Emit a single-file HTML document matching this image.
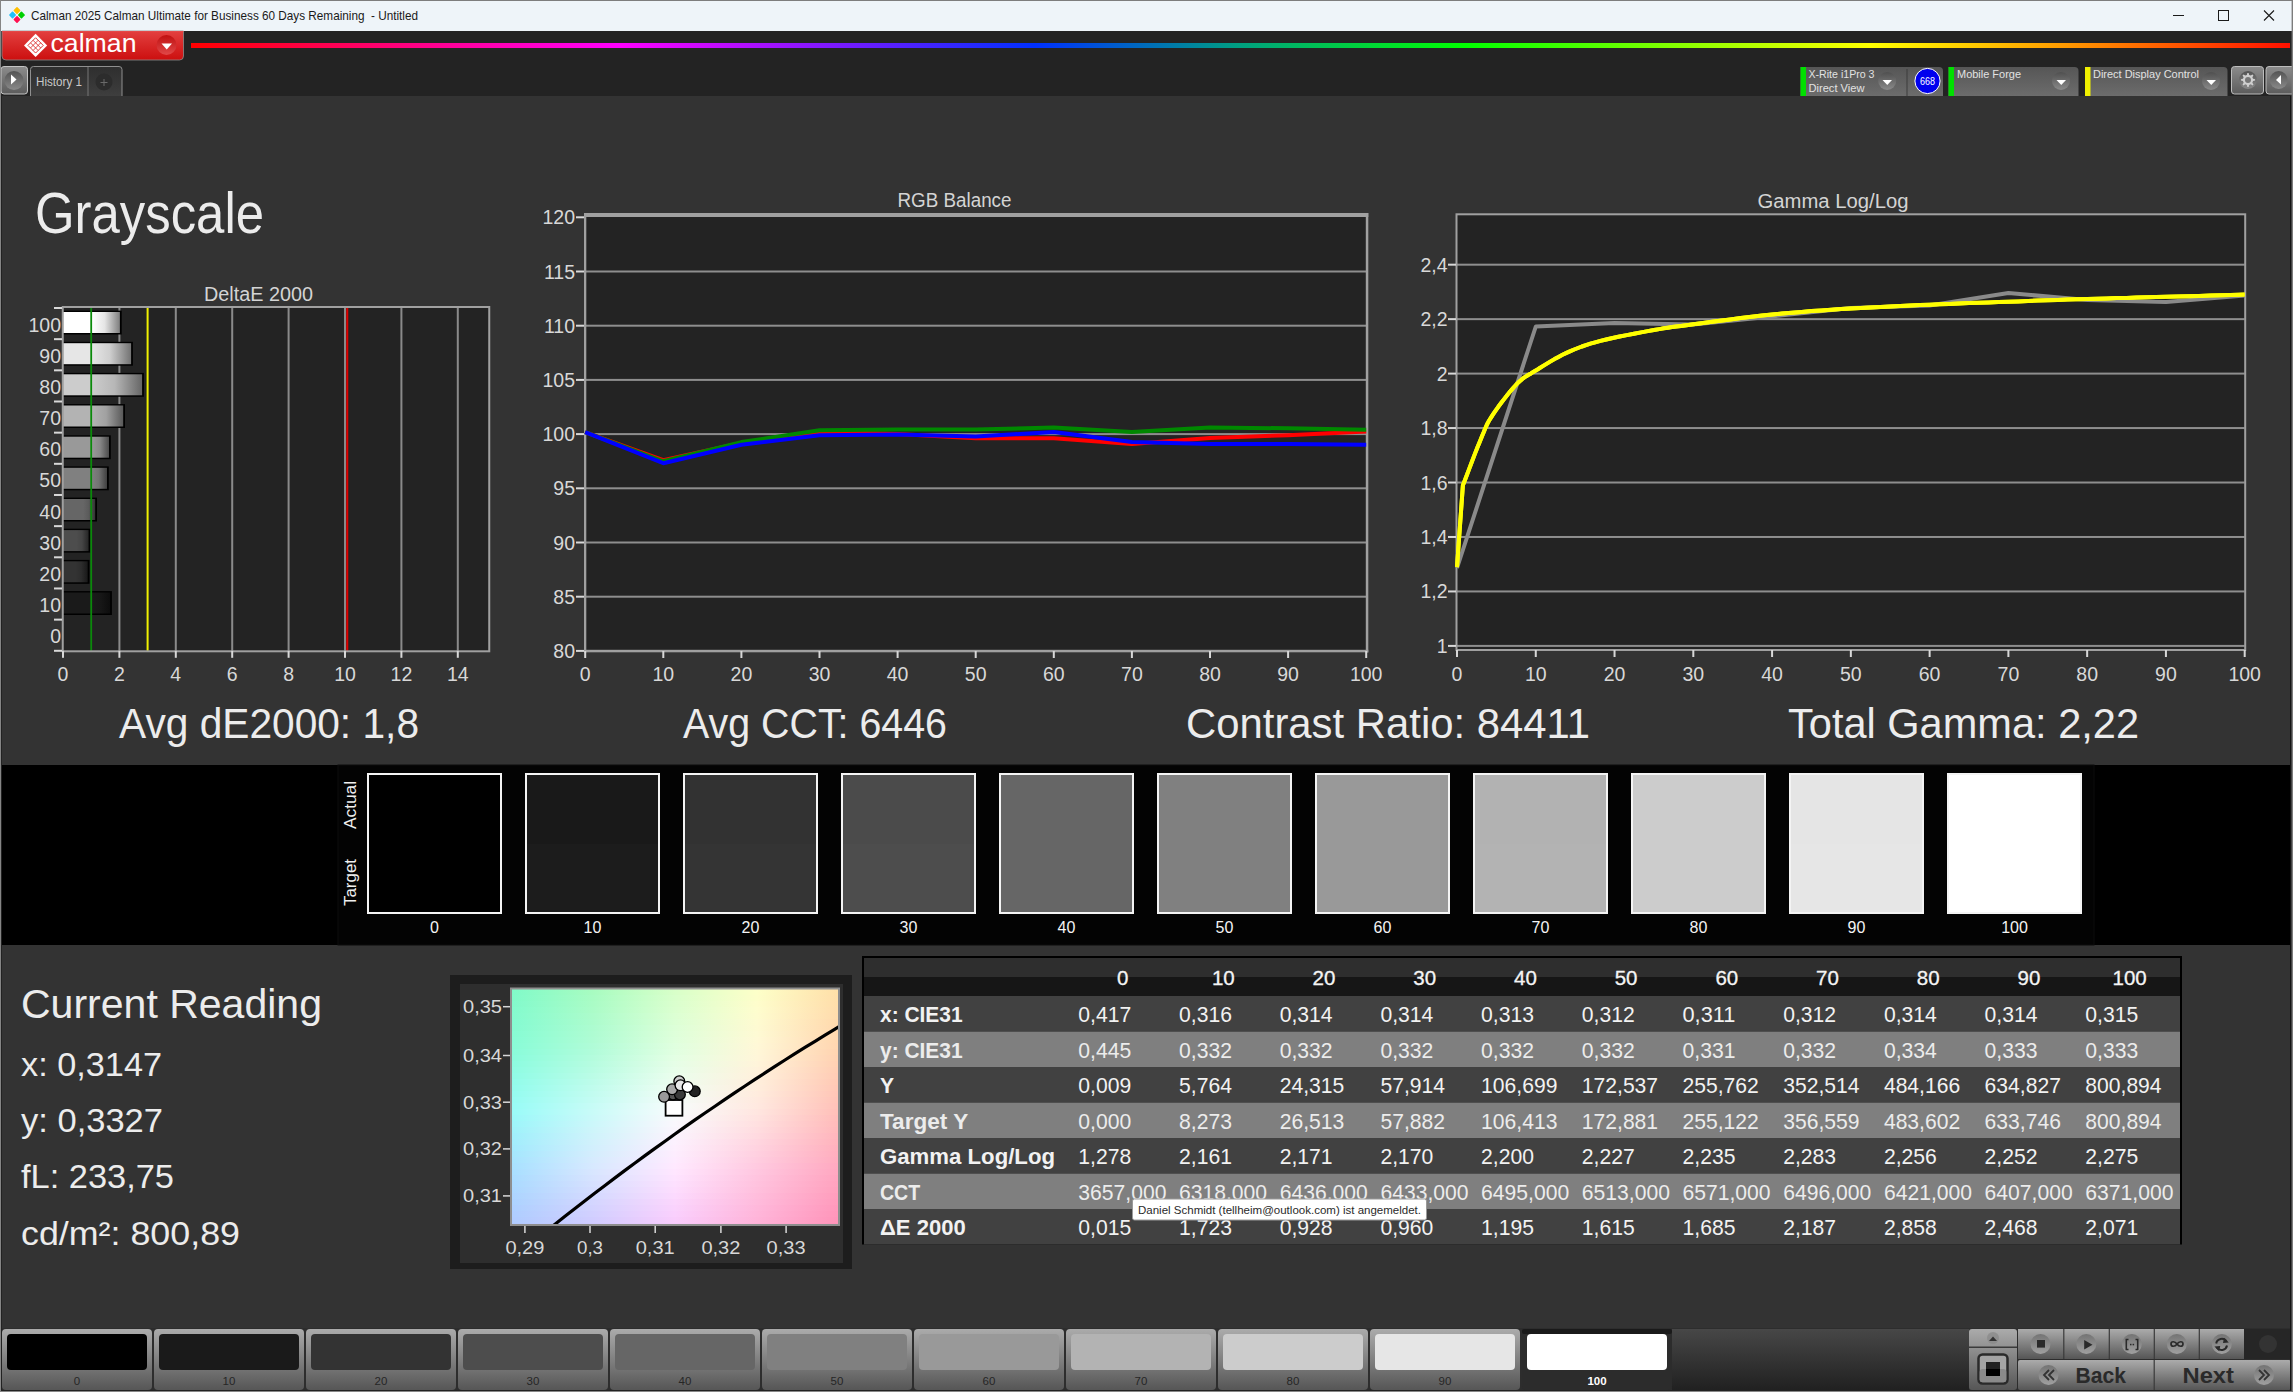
<!DOCTYPE html>
<html><head><meta charset="utf-8"><title>Calman</title>
<style>
html,body{margin:0;padding:0;width:2293px;height:1392px;overflow:hidden;background:#333;}
body{position:relative;font-family:"Liberation Sans",sans-serif;}
svg{position:absolute;left:0;top:0;}
text{font-family:"Liberation Sans",sans-serif;}
</style></head><body>

<svg width="2293" height="1392" viewBox="0 0 2293 1392">
<defs>
<linearGradient id="rainbow" x1="191" y1="0" x2="2290" y2="0" gradientUnits="userSpaceOnUse">
<stop offset="0" stop-color="#ff0000"/><stop offset="0.204" stop-color="#ff00ff"/>
<stop offset="0.402" stop-color="#0030ff"/><stop offset="0.5" stop-color="#00a080"/>
<stop offset="0.607" stop-color="#00ff00"/><stop offset="0.80" stop-color="#ffff00"/>
<stop offset="0.893" stop-color="#ff9900"/><stop offset="1" stop-color="#ff1000"/>
</linearGradient>
<linearGradient id="redbtn" x1="0" y1="0" x2="0" y2="1">
<stop offset="0" stop-color="#e3403f"/><stop offset="1" stop-color="#cc0f0f"/>
</linearGradient>
<linearGradient id="greybtn" x1="0" y1="0" x2="0" y2="1">
<stop offset="0" stop-color="#ababab"/><stop offset="1" stop-color="#565656"/>
</linearGradient>
<linearGradient id="devbox" x1="0" y1="0" x2="0" y2="1">
<stop offset="0" stop-color="#565656"/><stop offset="1" stop-color="#6c6c6c"/>
</linearGradient>
<linearGradient id="darkbar" x1="0" y1="0" x2="0" y2="1">
<stop offset="0" stop-color="#474747"/><stop offset="1" stop-color="#202020"/>
</linearGradient>
<linearGradient id="tabg" x1="0" y1="0" x2="0" y2="1">
<stop offset="0" stop-color="#2e2e2e"/><stop offset="1" stop-color="#3e3e3e"/>
</linearGradient>
<linearGradient id="playg" x1="0" y1="0" x2="0" y2="1">
<stop offset="0" stop-color="#8c8c8c"/><stop offset="1" stop-color="#5c5c5c"/>
</linearGradient>
<linearGradient id="circg2" x1="0" y1="0" x2="0" y2="1">
<stop offset="0" stop-color="#4e4e4e"/><stop offset="1" stop-color="#8e8e8e"/>
</linearGradient>
<linearGradient id="circg" x1="0" y1="0" x2="0" y2="1">
<stop offset="0" stop-color="#666"/><stop offset="1" stop-color="#b4b4b4"/>
</linearGradient>
</defs>
<rect x="0" y="0" width="2293" height="31" fill="#eef4f9"/>
<rect x="0" y="0" width="2293" height="1" fill="#7d7d7d"/>
<g transform="translate(17,15) rotate(45)"><rect x="-5.8" y="-5.8" width="5.3" height="5.3" rx="0.8" fill="#ffc000"/><rect x="0.5" y="-5.8" width="5.3" height="5.3" rx="0.8" fill="#00d000"/><rect x="-5.8" y="0.5" width="5.3" height="5.3" rx="0.8" fill="#20c0f8"/><rect x="0.5" y="0.5" width="5.3" height="5.3" rx="0.8" fill="#ff1050"/></g>
<text x="31" y="20" font-size="13" fill="#1a1a1a" text-anchor="start" textLength="387" lengthAdjust="spacingAndGlyphs" xml:space="preserve">Calman 2025 Calman Ultimate for Business 60 Days Remaining  - Untitled</text>
<rect x="2173" y="15" width="11" height="1" fill="#1a1a1a"/>
<rect x="2218.5" y="10.5" width="10" height="10" fill="none" stroke="#1a1a1a" stroke-width="1"/>
<path d="M2264 10.5 L2274 20.5 M2274 10.5 L2264 20.5" stroke="#1a1a1a" stroke-width="1.1"/>
<rect x="0" y="31" width="2293" height="65" fill="#232323"/>
<path d="M2 31 H183.5 V56 Q183.5 60 179.5 60 H6 Q2 60 2 56 Z" fill="url(#redbtn)" stroke="#8a8a8a" stroke-width="0.8"/>
<rect x="2" y="31" width="181.5" height="1" fill="#e54848"/>
<g transform="translate(35.6,45.4) rotate(45)"><rect x="-8.2" y="-8.2" width="16.4" height="16.4" fill="#fff"/><rect x="-5.4" y="-5.4" width="10.8" height="10.8" fill="none" stroke="#d82424" stroke-width="0.85"/><path d="M-1.8 -5.4 V5.4 M1.8 -5.4 V5.4 M-5.4 -1.8 H5.4 M-5.4 1.8 H5.4" stroke="#d82424" stroke-width="0.8"/></g>
<text x="50.5" y="52" font-size="25.5" fill="#ffffff" text-anchor="start" textLength="86" lengthAdjust="spacingAndGlyphs" >calman</text>
<defs><linearGradient id="redc" x1="0" y1="0" x2="0" y2="1"><stop offset="0" stop-color="#c01010"/><stop offset="1" stop-color="#e04848"/></linearGradient></defs>
<circle cx="166.5" cy="45" r="10" fill="url(#redc)"/>
<path d="M161.5 43.5 H172 L166.75 49.5 Z" fill="#fff"/>
<rect x="191" y="43" width="2099" height="5" fill="url(#rainbow)"/>
<rect x="1" y="66.5" width="26.5" height="27.5" rx="3" fill="url(#playg)" stroke="#c4c4c4" stroke-width="1"/>
<circle cx="14" cy="80.5" r="9.5" fill="url(#circg2)" opacity="0.9"/>
<path d="M11 74.5 L16.5 79.5 L11 84.5 Z" fill="#fff"/>
<path d="M30.5 96 V69.5 Q30.5 66.5 33.5 66.5 H119 Q122 66.5 122 69.5 V96" fill="url(#tabg)" stroke="#8f8f8f" stroke-width="1"/>
<rect x="87.5" y="67" width="1" height="29" fill="#777"/>
<text x="36" y="86" font-size="12" fill="#c9c9c9" text-anchor="start" textLength="46" lengthAdjust="spacingAndGlyphs" >History 1</text>
<circle cx="104" cy="82" r="8.5" fill="#2c2c2c"/>
<path d="M100.5 82.5 H107.5 M104 79 V86" stroke="#6a6a6a" stroke-width="1"/>
<path d="M1800.5 96 V67 H1939 Q1943 67 1943 71 V96 Z" fill="url(#devbox)"/>
<rect x="1800.5" y="67" width="5.5" height="29" fill="#00e000"/>
<text x="1808.5" y="78" font-size="11.5" fill="#e2e2e2" text-anchor="start" textLength="66" lengthAdjust="spacingAndGlyphs" >X-Rite i1Pro 3</text>
<text x="1808.5" y="91.5" font-size="11.5" fill="#e2e2e2" text-anchor="start" textLength="56" lengthAdjust="spacingAndGlyphs" >Direct View</text>
<circle cx="1887.2" cy="81" r="9" fill="url(#circg2)" opacity="0.9"/>
<path d="M1882.5 80 H1892 L1887.25 85 Z" fill="#fff"/>
<rect x="1906.5" y="69" width="1" height="27" fill="#3c3c3c"/>
<circle cx="1927.5" cy="81" r="12.6" fill="#0000ee" stroke="#fff" stroke-width="1"/>
<text x="1927.5" y="85" font-size="11" fill="#fff" text-anchor="middle" textLength="15" lengthAdjust="spacingAndGlyphs" >668</text>
<path d="M1948.5 96 V67 H2074.5 Q2078.5 67 2078.5 71 V96 Z" fill="url(#devbox)"/>
<rect x="1948.5" y="67" width="5.5" height="29" fill="#00e000"/>
<text x="1957" y="78" font-size="11.5" fill="#e2e2e2" text-anchor="start" textLength="64" lengthAdjust="spacingAndGlyphs" >Mobile Forge</text>
<circle cx="2061" cy="81" r="9" fill="url(#circg2)" opacity="0.9"/>
<path d="M2056.5 80 H2066 L2061.25 85 Z" fill="#fff"/>
<path d="M2085 96 V67 H2223.5 Q2227.5 67 2227.5 71 V96 Z" fill="url(#devbox)"/>
<rect x="2085" y="67" width="5.5" height="29" fill="#f0f000"/>
<text x="2093" y="78" font-size="11.5" fill="#e2e2e2" text-anchor="start" textLength="106" lengthAdjust="spacingAndGlyphs" >Direct Display Control</text>
<circle cx="2211" cy="81" r="9" fill="url(#circg2)" opacity="0.9"/>
<path d="M2206.5 80 H2216 L2211.25 85 Z" fill="#fff"/>
<rect x="2231.5" y="66.5" width="32" height="27.5" rx="3" fill="url(#playg)" stroke="#bdbdbd" stroke-width="1"/>
<circle cx="2248" cy="80" r="9" fill="url(#circg2)" opacity="0.9"/>
<path d="M2248 73.5 l1.3 0 0.5 2 1.6 0.7 1.8 -1.1 0.9 0.9 -1.1 1.8 0.7 1.6 2 0.5 0 1.3 -2 0.5 -0.7 1.6 1.1 1.8 -0.9 0.9 -1.8 -1.1 -1.6 0.7 -0.5 2 -1.3 0 -0.5 -2 -1.6 -0.7 -1.8 1.1 -0.9 -0.9 1.1 -1.8 -0.7 -1.6 -2 -0.5 0 -1.3 2 -0.5 0.7 -1.6 -1.1 -1.8 0.9 -0.9 1.8 1.1 1.6 -0.7 z" fill="#d0d0d0" transform="translate(-0.65,-0.6)"/>
<circle cx="2248" cy="79.9" r="3" fill="#777"/>
<rect x="2266" y="66.5" width="30" height="27.5" rx="3" fill="url(#playg)" stroke="#bdbdbd" stroke-width="1"/>
<circle cx="2278.7" cy="80" r="9" fill="url(#circg2)" opacity="0.9"/>
<path d="M2281 75 L2276 80 L2281 84.5 Z" fill="#fff"/>
<rect x="0" y="96" width="2293" height="1232" fill="#333333"/>
<text x="35" y="232.5" font-size="56.5" fill="#ececec" text-anchor="start" textLength="229" lengthAdjust="spacingAndGlyphs" >Grayscale</text>
<rect x="63" y="308" width="425.5" height="342.79999999999995" fill="#232323"/>
<text x="258.5" y="301" font-size="19.5" fill="#d4d4d4" text-anchor="middle" textLength="109" lengthAdjust="spacingAndGlyphs" >DeltaE 2000</text>
<rect x="118.4" y="308" width="2" height="342.79999999999995" fill="#8a8a8a"/>
<rect x="174.8" y="308" width="2" height="342.79999999999995" fill="#8a8a8a"/>
<rect x="231.2" y="308" width="2" height="342.79999999999995" fill="#8a8a8a"/>
<rect x="287.6" y="308" width="2" height="342.79999999999995" fill="#8a8a8a"/>
<rect x="344.0" y="308" width="2" height="342.79999999999995" fill="#8a8a8a"/>
<rect x="400.4" y="308" width="2" height="342.79999999999995" fill="#8a8a8a"/>
<rect x="456.8" y="308" width="2" height="342.79999999999995" fill="#8a8a8a"/>
<defs>
<linearGradient id="bar0" gradientUnits="userSpaceOnUse" x1="49.9" y1="0" x2="61.9" y2="0"><stop offset="0" stop-color="rgb(0,0,0)"/><stop offset="0.45" stop-color="rgb(0,0,0)"/><stop offset="1" stop-color="rgb(0,0,0)"/></linearGradient>
<linearGradient id="bar1" gradientUnits="userSpaceOnUse" x1="92.2" y1="0" x2="110.1" y2="0"><stop offset="0" stop-color="rgb(26,26,26)"/><stop offset="0.45" stop-color="rgb(23,23,23)"/><stop offset="1" stop-color="rgb(13,13,13)"/></linearGradient>
<linearGradient id="bar2" gradientUnits="userSpaceOnUse" x1="75.7" y1="0" x2="87.7" y2="0"><stop offset="0" stop-color="rgb(51,51,51)"/><stop offset="0.45" stop-color="rgb(45,45,45)"/><stop offset="1" stop-color="rgb(25,25,25)"/></linearGradient>
<linearGradient id="bar3" gradientUnits="userSpaceOnUse" x1="76.6" y1="0" x2="88.6" y2="0"><stop offset="0" stop-color="rgb(77,77,77)"/><stop offset="0.45" stop-color="rgb(69,69,69)"/><stop offset="1" stop-color="rgb(38,38,38)"/></linearGradient>
<linearGradient id="bar4" gradientUnits="userSpaceOnUse" x1="83.2" y1="0" x2="95.2" y2="0"><stop offset="0" stop-color="rgb(102,102,102)"/><stop offset="0.45" stop-color="rgb(91,91,91)"/><stop offset="1" stop-color="rgb(51,51,51)"/></linearGradient>
<linearGradient id="bar5" gradientUnits="userSpaceOnUse" x1="92.2" y1="0" x2="107.0" y2="0"><stop offset="0" stop-color="rgb(128,128,128)"/><stop offset="0.45" stop-color="rgb(115,115,115)"/><stop offset="1" stop-color="rgb(64,64,64)"/></linearGradient>
<linearGradient id="bar6" gradientUnits="userSpaceOnUse" x1="92.2" y1="0" x2="109.0" y2="0"><stop offset="0" stop-color="rgb(153,153,153)"/><stop offset="0.45" stop-color="rgb(137,137,137)"/><stop offset="1" stop-color="rgb(76,76,76)"/></linearGradient>
<linearGradient id="bar7" gradientUnits="userSpaceOnUse" x1="92.2" y1="0" x2="123.2" y2="0"><stop offset="0" stop-color="rgb(179,179,179)"/><stop offset="0.45" stop-color="rgb(161,161,161)"/><stop offset="1" stop-color="rgb(89,89,89)"/></linearGradient>
<linearGradient id="bar8" gradientUnits="userSpaceOnUse" x1="92.2" y1="0" x2="142.1" y2="0"><stop offset="0" stop-color="rgb(204,204,204)"/><stop offset="0.45" stop-color="rgb(183,183,183)"/><stop offset="1" stop-color="rgb(102,102,102)"/></linearGradient>
<linearGradient id="bar9" gradientUnits="userSpaceOnUse" x1="92.2" y1="0" x2="131.1" y2="0"><stop offset="0" stop-color="rgb(230,230,230)"/><stop offset="0.45" stop-color="rgb(207,207,207)"/><stop offset="1" stop-color="rgb(115,115,115)"/></linearGradient>
<linearGradient id="bar10" gradientUnits="userSpaceOnUse" x1="92.2" y1="0" x2="119.9" y2="0"><stop offset="0" stop-color="rgb(255,255,255)"/><stop offset="0.45" stop-color="rgb(229,229,229)"/><stop offset="1" stop-color="rgb(127,127,127)"/></linearGradient>
</defs>
<rect x="63" y="591.1" width="48.9" height="23.9" fill="#000"/>
<rect x="63" y="592.5" width="47.1" height="21" fill="url(#bar1)"/>
<rect x="63" y="559.9" width="26.5" height="23.9" fill="#000"/>
<rect x="63" y="561.3" width="24.7" height="21" fill="url(#bar2)"/>
<rect x="63" y="528.7" width="27.4" height="23.9" fill="#000"/>
<rect x="63" y="530.1" width="25.6" height="21" fill="url(#bar3)"/>
<rect x="63" y="497.6" width="34.0" height="23.9" fill="#000"/>
<rect x="63" y="499.0" width="32.2" height="21" fill="url(#bar4)"/>
<rect x="63" y="466.4" width="45.8" height="23.9" fill="#000"/>
<rect x="63" y="467.8" width="44.0" height="21" fill="url(#bar5)"/>
<rect x="63" y="435.3" width="47.8" height="23.9" fill="#000"/>
<rect x="63" y="436.7" width="46.0" height="21" fill="url(#bar6)"/>
<rect x="63" y="404.1" width="62.0" height="23.9" fill="#000"/>
<rect x="63" y="405.5" width="60.2" height="21" fill="url(#bar7)"/>
<rect x="63" y="372.9" width="80.9" height="23.9" fill="#000"/>
<rect x="63" y="374.3" width="79.1" height="21" fill="url(#bar8)"/>
<rect x="63" y="341.8" width="69.9" height="23.9" fill="#000"/>
<rect x="63" y="343.2" width="68.1" height="21" fill="url(#bar9)"/>
<rect x="63" y="310.6" width="58.7" height="23.9" fill="#000"/>
<rect x="63" y="312.0" width="56.9" height="21" fill="url(#bar10)"/>
<rect x="90.3" y="308" width="1.8" height="342.79999999999995" fill="#0a8a0a"/>
<rect x="146.6" y="308" width="2" height="342.79999999999995" fill="#f0f000"/>
<rect x="346.256" y="308" width="2" height="342.79999999999995" fill="#e00000"/>
<rect x="62.75" y="307" width="426.5" height="344.29999999999995" fill="none" stroke="#a0a0a0" stroke-width="2"/>
<rect x="54" y="307.0" width="8" height="2" fill="#d8d8d8"/>
<rect x="54" y="338.1636363636364" width="8" height="2" fill="#d8d8d8"/>
<rect x="54" y="369.3272727272727" width="8" height="2" fill="#d8d8d8"/>
<rect x="54" y="400.4909090909091" width="8" height="2" fill="#d8d8d8"/>
<rect x="54" y="431.6545454545454" width="8" height="2" fill="#d8d8d8"/>
<rect x="54" y="462.8181818181818" width="8" height="2" fill="#d8d8d8"/>
<rect x="54" y="493.9818181818182" width="8" height="2" fill="#d8d8d8"/>
<rect x="54" y="525.1454545454545" width="8" height="2" fill="#d8d8d8"/>
<rect x="54" y="556.3090909090909" width="8" height="2" fill="#d8d8d8"/>
<rect x="54" y="587.4727272727273" width="8" height="2" fill="#d8d8d8"/>
<rect x="54" y="618.6363636363636" width="8" height="2" fill="#d8d8d8"/>
<rect x="54" y="649.8" width="8" height="2" fill="#d8d8d8"/>
<text x="61" y="643.2181818181817" font-size="19.5" fill="#d8d8d8" text-anchor="end" >0</text>
<text x="61" y="612.0545454545454" font-size="19.5" fill="#d8d8d8" text-anchor="end" >10</text>
<text x="61" y="580.8909090909091" font-size="19.5" fill="#d8d8d8" text-anchor="end" >20</text>
<text x="61" y="549.7272727272727" font-size="19.5" fill="#d8d8d8" text-anchor="end" >30</text>
<text x="61" y="518.5636363636363" font-size="19.5" fill="#d8d8d8" text-anchor="end" >40</text>
<text x="61" y="487.4" font-size="19.5" fill="#d8d8d8" text-anchor="end" >50</text>
<text x="61" y="456.23636363636365" font-size="19.5" fill="#d8d8d8" text-anchor="end" >60</text>
<text x="61" y="425.07272727272726" font-size="19.5" fill="#d8d8d8" text-anchor="end" >70</text>
<text x="61" y="393.9090909090909" font-size="19.5" fill="#d8d8d8" text-anchor="end" >80</text>
<text x="61" y="362.74545454545455" font-size="19.5" fill="#d8d8d8" text-anchor="end" >90</text>
<text x="61" y="331.58181818181816" font-size="19.5" fill="#d8d8d8" text-anchor="end" >100</text>
<rect x="62.0" y="650.8" width="2" height="7" fill="#d8d8d8"/>
<text x="63.0" y="681" font-size="19.5" fill="#d8d8d8" text-anchor="middle" >0</text>
<rect x="118.4" y="650.8" width="2" height="7" fill="#d8d8d8"/>
<text x="119.4" y="681" font-size="19.5" fill="#d8d8d8" text-anchor="middle" >2</text>
<rect x="174.8" y="650.8" width="2" height="7" fill="#d8d8d8"/>
<text x="175.8" y="681" font-size="19.5" fill="#d8d8d8" text-anchor="middle" >4</text>
<rect x="231.2" y="650.8" width="2" height="7" fill="#d8d8d8"/>
<text x="232.2" y="681" font-size="19.5" fill="#d8d8d8" text-anchor="middle" >6</text>
<rect x="287.6" y="650.8" width="2" height="7" fill="#d8d8d8"/>
<text x="288.6" y="681" font-size="19.5" fill="#d8d8d8" text-anchor="middle" >8</text>
<rect x="344.0" y="650.8" width="2" height="7" fill="#d8d8d8"/>
<text x="345.0" y="681" font-size="19.5" fill="#d8d8d8" text-anchor="middle" >10</text>
<rect x="400.4" y="650.8" width="2" height="7" fill="#d8d8d8"/>
<text x="401.4" y="681" font-size="19.5" fill="#d8d8d8" text-anchor="middle" >12</text>
<rect x="456.8" y="650.8" width="2" height="7" fill="#d8d8d8"/>
<text x="457.8" y="681" font-size="19.5" fill="#d8d8d8" text-anchor="middle" >14</text>
<rect x="585" y="216" width="781.5" height="435" fill="#232323"/>
<text x="954.5" y="207" font-size="19.5" fill="#d4d4d4" text-anchor="middle" textLength="114" lengthAdjust="spacingAndGlyphs" >RGB Balance</text>
<rect x="585" y="595.6999999999999" width="781.5" height="2" fill="#8e8e8e"/>
<rect x="585" y="541.5" width="781.5" height="2" fill="#8e8e8e"/>
<rect x="585" y="487.29999999999995" width="781.5" height="2" fill="#8e8e8e"/>
<rect x="585" y="433.09999999999997" width="781.5" height="2" fill="#8e8e8e"/>
<rect x="585" y="378.9" width="781.5" height="2" fill="#8e8e8e"/>
<rect x="585" y="324.7" width="781.5" height="2" fill="#8e8e8e"/>
<rect x="585" y="270.5" width="781.5" height="2" fill="#8e8e8e"/>
<rect x="584" y="213" width="784.3" height="4" fill="#a0a0a0"/>
<rect x="584" y="213" width="2.3" height="439.5" fill="#a0a0a0"/>
<rect x="1365.8" y="213" width="2.5" height="439.5" fill="#a0a0a0"/>
<rect x="584" y="649.8" width="784.3" height="2.5" fill="#a0a0a0"/>
<rect x="576" y="649.9" width="8" height="2" fill="#d8d8d8"/>
<text x="575" y="657.9" font-size="19.5" fill="#d8d8d8" text-anchor="end" >80</text>
<rect x="576" y="595.6999999999999" width="8" height="2" fill="#d8d8d8"/>
<text x="575" y="603.6999999999999" font-size="19.5" fill="#d8d8d8" text-anchor="end" >85</text>
<rect x="576" y="541.5" width="8" height="2" fill="#d8d8d8"/>
<text x="575" y="549.5" font-size="19.5" fill="#d8d8d8" text-anchor="end" >90</text>
<rect x="576" y="487.29999999999995" width="8" height="2" fill="#d8d8d8"/>
<text x="575" y="495.29999999999995" font-size="19.5" fill="#d8d8d8" text-anchor="end" >95</text>
<rect x="576" y="433.09999999999997" width="8" height="2" fill="#d8d8d8"/>
<text x="575" y="441.09999999999997" font-size="19.5" fill="#d8d8d8" text-anchor="end" >100</text>
<rect x="576" y="378.9" width="8" height="2" fill="#d8d8d8"/>
<text x="575" y="386.9" font-size="19.5" fill="#d8d8d8" text-anchor="end" >105</text>
<rect x="576" y="324.7" width="8" height="2" fill="#d8d8d8"/>
<text x="575" y="332.7" font-size="19.5" fill="#d8d8d8" text-anchor="end" >110</text>
<rect x="576" y="270.5" width="8" height="2" fill="#d8d8d8"/>
<text x="575" y="278.5" font-size="19.5" fill="#d8d8d8" text-anchor="end" >115</text>
<rect x="576" y="216.29999999999995" width="8" height="2" fill="#d8d8d8"/>
<text x="575" y="224.29999999999995" font-size="19.5" fill="#d8d8d8" text-anchor="end" >120</text>
<rect x="584.2" y="651" width="2" height="7" fill="#d8d8d8"/>
<text x="585.2" y="681" font-size="19.5" fill="#d8d8d8" text-anchor="middle" >0</text>
<rect x="662.3000000000001" y="651" width="2" height="7" fill="#d8d8d8"/>
<text x="663.3000000000001" y="681" font-size="19.5" fill="#d8d8d8" text-anchor="middle" >10</text>
<rect x="740.4000000000001" y="651" width="2" height="7" fill="#d8d8d8"/>
<text x="741.4000000000001" y="681" font-size="19.5" fill="#d8d8d8" text-anchor="middle" >20</text>
<rect x="818.5" y="651" width="2" height="7" fill="#d8d8d8"/>
<text x="819.5" y="681" font-size="19.5" fill="#d8d8d8" text-anchor="middle" >30</text>
<rect x="896.6" y="651" width="2" height="7" fill="#d8d8d8"/>
<text x="897.6" y="681" font-size="19.5" fill="#d8d8d8" text-anchor="middle" >40</text>
<rect x="974.7" y="651" width="2" height="7" fill="#d8d8d8"/>
<text x="975.7" y="681" font-size="19.5" fill="#d8d8d8" text-anchor="middle" >50</text>
<rect x="1052.8" y="651" width="2" height="7" fill="#d8d8d8"/>
<text x="1053.8" y="681" font-size="19.5" fill="#d8d8d8" text-anchor="middle" >60</text>
<rect x="1130.9" y="651" width="2" height="7" fill="#d8d8d8"/>
<text x="1131.9" y="681" font-size="19.5" fill="#d8d8d8" text-anchor="middle" >70</text>
<rect x="1209.0" y="651" width="2" height="7" fill="#d8d8d8"/>
<text x="1210.0" y="681" font-size="19.5" fill="#d8d8d8" text-anchor="middle" >80</text>
<rect x="1287.1" y="651" width="2" height="7" fill="#d8d8d8"/>
<text x="1288.1" y="681" font-size="19.5" fill="#d8d8d8" text-anchor="middle" >90</text>
<rect x="1365.2" y="651" width="2" height="7" fill="#d8d8d8"/>
<text x="1366.2" y="681" font-size="19.5" fill="#d8d8d8" text-anchor="middle" >100</text>
<polyline points="585.2,432.1 663.3,460.2 741.4,442.9 819.5,431.4 897.6,434.1 975.7,438.3 1053.8,438.3 1131.9,444.0 1210.0,437.9 1288.1,435.2 1366.2,431.4" fill="none" stroke="#ff0000" stroke-width="4" stroke-linejoin="round"/>
<polyline points="585.2,432.1 663.3,461.3 741.4,442.1 819.5,430.2 897.6,429.5 975.7,429.5 1053.8,427.5 1131.9,432.1 1210.0,427.5 1288.1,428.3 1366.2,429.8" fill="none" stroke="#008800" stroke-width="4" stroke-linejoin="round"/>
<polyline points="585.2,432.1 663.3,463.2 741.4,444.8 819.5,435.2 897.6,434.4 975.7,436.4 1053.8,432.1 1131.9,442.1 1210.0,444.0 1288.1,444.0 1366.2,444.8" fill="none" stroke="#0000ff" stroke-width="4" stroke-linejoin="round"/>
<rect x="1457" y="214.3" width="787.6999999999998" height="435.7" fill="#232323"/>
<text x="1833" y="207.5" font-size="19.5" fill="#d4d4d4" text-anchor="middle" textLength="151" lengthAdjust="spacingAndGlyphs" >Gamma Log/Log</text>
<rect x="1457" y="590.4399999999999" width="787.6999999999998" height="2" fill="#8e8e8e"/>
<rect x="1457" y="535.98" width="787.6999999999998" height="2" fill="#8e8e8e"/>
<rect x="1457" y="481.52" width="787.6999999999998" height="2" fill="#8e8e8e"/>
<rect x="1457" y="427.05999999999995" width="787.6999999999998" height="2" fill="#8e8e8e"/>
<rect x="1457" y="372.59999999999997" width="787.6999999999998" height="2" fill="#8e8e8e"/>
<rect x="1457" y="318.13999999999993" width="787.6999999999998" height="2" fill="#8e8e8e"/>
<rect x="1457" y="263.68" width="787.6999999999998" height="2" fill="#8e8e8e"/>
<rect x="1457" y="644.9" width="787.6999999999998" height="2" fill="#8e8e8e"/>
<rect x="1456.5" y="214.3" width="788.6999999999998" height="435.7" fill="none" stroke="#a0a0a0" stroke-width="2"/>
<rect x="1448" y="644.9" width="8" height="2" fill="#d8d8d8"/>
<text x="1447.5" y="652.9" font-size="19.5" fill="#d8d8d8" text-anchor="end" >1</text>
<rect x="1448" y="590.4399999999999" width="8" height="2" fill="#d8d8d8"/>
<text x="1447.5" y="598.4399999999999" font-size="19.5" fill="#d8d8d8" text-anchor="end" >1,2</text>
<rect x="1448" y="535.98" width="8" height="2" fill="#d8d8d8"/>
<text x="1447.5" y="543.98" font-size="19.5" fill="#d8d8d8" text-anchor="end" >1,4</text>
<rect x="1448" y="481.52" width="8" height="2" fill="#d8d8d8"/>
<text x="1447.5" y="489.52" font-size="19.5" fill="#d8d8d8" text-anchor="end" >1,6</text>
<rect x="1448" y="427.05999999999995" width="8" height="2" fill="#d8d8d8"/>
<text x="1447.5" y="435.05999999999995" font-size="19.5" fill="#d8d8d8" text-anchor="end" >1,8</text>
<rect x="1448" y="372.59999999999997" width="8" height="2" fill="#d8d8d8"/>
<text x="1447.5" y="380.59999999999997" font-size="19.5" fill="#d8d8d8" text-anchor="end" >2</text>
<rect x="1448" y="318.13999999999993" width="8" height="2" fill="#d8d8d8"/>
<text x="1447.5" y="326.13999999999993" font-size="19.5" fill="#d8d8d8" text-anchor="end" >2,2</text>
<rect x="1448" y="263.68" width="8" height="2" fill="#d8d8d8"/>
<text x="1447.5" y="271.68" font-size="19.5" fill="#d8d8d8" text-anchor="end" >2,4</text>
<rect x="1456.0" y="650" width="2" height="7" fill="#d8d8d8"/>
<text x="1457.0" y="681" font-size="19.5" fill="#d8d8d8" text-anchor="middle" >0</text>
<rect x="1534.77" y="650" width="2" height="7" fill="#d8d8d8"/>
<text x="1535.77" y="681" font-size="19.5" fill="#d8d8d8" text-anchor="middle" >10</text>
<rect x="1613.54" y="650" width="2" height="7" fill="#d8d8d8"/>
<text x="1614.54" y="681" font-size="19.5" fill="#d8d8d8" text-anchor="middle" >20</text>
<rect x="1692.31" y="650" width="2" height="7" fill="#d8d8d8"/>
<text x="1693.31" y="681" font-size="19.5" fill="#d8d8d8" text-anchor="middle" >30</text>
<rect x="1771.08" y="650" width="2" height="7" fill="#d8d8d8"/>
<text x="1772.08" y="681" font-size="19.5" fill="#d8d8d8" text-anchor="middle" >40</text>
<rect x="1849.85" y="650" width="2" height="7" fill="#d8d8d8"/>
<text x="1850.85" y="681" font-size="19.5" fill="#d8d8d8" text-anchor="middle" >50</text>
<rect x="1928.62" y="650" width="2" height="7" fill="#d8d8d8"/>
<text x="1929.62" y="681" font-size="19.5" fill="#d8d8d8" text-anchor="middle" >60</text>
<rect x="2007.3899999999999" y="650" width="2" height="7" fill="#d8d8d8"/>
<text x="2008.3899999999999" y="681" font-size="19.5" fill="#d8d8d8" text-anchor="middle" >70</text>
<rect x="2086.16" y="650" width="2" height="7" fill="#d8d8d8"/>
<text x="2087.16" y="681" font-size="19.5" fill="#d8d8d8" text-anchor="middle" >80</text>
<rect x="2164.93" y="650" width="2" height="7" fill="#d8d8d8"/>
<text x="2165.93" y="681" font-size="19.5" fill="#d8d8d8" text-anchor="middle" >90</text>
<rect x="2243.7" y="650" width="2" height="7" fill="#d8d8d8"/>
<text x="2244.7" y="681" font-size="19.5" fill="#d8d8d8" text-anchor="middle" >100</text>
<polyline points="1457.0,568.0 1535.8,326.5 1614.5,323.0 1693.3,324.6 1772.1,316.4 1850.8,308.0 1929.6,305.5 2008.4,293.0 2087.2,300.1 2165.9,302.0 2244.7,295.4" fill="none" stroke="#8a8a8a" stroke-width="4" stroke-linejoin="round"/>
<polyline points="1457.0,567.2 1462.9,485.2 1464.5,481.2 1466.6,475.7 1469.1,469.1 1471.9,461.8 1474.7,454.4 1477.5,447.3 1480.1,440.9 1482.2,435.7 1483.9,431.7 1485.2,428.5 1486.4,425.9 1487.4,423.7 1488.5,421.6 1489.8,419.5 1491.3,417.1 1493.2,414.2 1495.6,410.7 1498.3,406.8 1501.3,402.8 1504.5,398.6 1507.7,394.5 1510.9,390.6 1514.0,387.0 1516.9,383.9 1519.4,381.5 1521.8,379.4 1524.1,377.7 1526.3,376.2 1528.6,374.8 1531.0,373.4 1533.6,371.8 1536.6,370.1 1539.8,368.0 1543.2,365.9 1546.9,363.6 1550.6,361.4 1554.5,359.1 1558.5,356.9 1562.5,354.8 1566.5,352.9 1570.4,351.2 1574.2,349.5 1578.0,348.0 1581.9,346.5 1586.0,345.1 1590.4,343.7 1595.2,342.3 1600.4,340.9 1606.2,339.5 1612.7,338.0 1619.6,336.5 1626.8,335.1 1634.0,333.7 1641.1,332.4 1647.8,331.1 1653.9,330.0 1659.3,329.1 1663.8,328.3 1668.0,327.7 1672.0,327.1 1676.3,326.5 1681.0,325.9 1686.6,325.2 1693.3,324.3 1701.3,323.3 1710.2,322.1 1720.0,320.8 1730.2,319.4 1740.8,318.1 1751.5,316.8 1762.0,315.6 1772.1,314.5 1781.9,313.6 1791.8,312.7 1801.6,311.9 1811.5,311.1 1821.3,310.4 1831.2,309.8 1841.0,309.1 1850.9,308.5 1860.7,307.9 1870.5,307.4 1880.4,306.9 1890.2,306.4 1900.1,306.0 1909.9,305.6 1919.8,305.1 1929.6,304.7 1939.5,304.3 1949.3,303.9 1959.2,303.5 1969.0,303.1 1978.9,302.8 1988.7,302.4 1998.5,302.1 2008.4,301.7 2018.2,301.4 2028.1,301.0 2037.9,300.6 2047.8,300.3 2057.6,300.0 2067.5,299.6 2077.3,299.3 2087.2,299.0 2097.0,298.7 2106.9,298.4 2116.7,298.1 2126.5,297.9 2136.4,297.6 2146.2,297.3 2156.1,297.1 2165.9,296.8 2176.3,296.5 2187.5,296.2 2198.9,295.9 2210.2,295.6 2220.9,295.3 2230.5,295.0 2238.6,294.8 2244.7,294.6" fill="none" stroke="#ffff00" stroke-width="4" stroke-linejoin="round"/>
<polyline points="1457.0,567.2 1462.9,485.2 1464.5,481.2 1466.6,475.7 1469.1,469.1 1471.9,461.8 1474.7,454.4 1477.5,447.3 1480.1,440.9 1482.2,435.7 1483.9,431.7 1485.2,428.5 1486.4,425.9 1487.4,423.7 1488.5,421.6 1489.8,419.5 1491.3,417.1 1493.2,414.2 1495.6,410.7 1498.3,406.8 1501.3,402.8 1504.5,398.6 1507.7,394.5 1510.9,390.6 1514.0,387.0 1516.9,383.9 1519.4,381.5 1521.8,379.4 1524.1,377.7 1526.3,376.2 1528.6,374.8 1531.0,373.4 1533.6,371.8 1536.6,370.1 1539.8,368.0 1543.2,365.9 1546.9,363.6 1550.6,361.4 1554.5,359.1 1558.5,356.9 1562.5,354.8 1566.5,352.9 1570.4,351.2 1574.2,349.5 1578.0,348.0 1581.9,346.5 1586.0,345.1 1590.4,343.7 1595.2,342.3 1600.4,340.9 1606.2,339.5 1612.7,338.0 1619.6,336.5 1626.8,335.1 1634.0,333.7 1641.1,332.4 1647.8,331.1 1653.9,330.0 1659.3,329.1 1663.8,328.3 1668.0,327.7 1672.0,327.1 1676.3,326.5 1681.0,325.9 1686.6,325.2 1693.3,324.3 1701.3,323.3 1710.2,322.1 1720.0,320.8 1730.2,319.4 1740.8,318.1 1751.5,316.8 1762.0,315.6 1772.1,314.5 1781.9,313.6 1791.8,312.7 1801.6,311.9 1811.5,311.1 1821.3,310.4 1831.2,309.8 1841.0,309.1 1850.9,308.5 1860.7,307.9 1870.5,307.4 1880.4,306.9 1890.2,306.4 1900.1,306.0 1909.9,305.6 1919.8,305.1 1929.6,304.7 1939.5,304.3 1949.3,303.9 1959.2,303.5 1969.0,303.1 1978.9,302.8 1988.7,302.4 1998.5,302.1 2008.4,301.7 2018.2,301.4 2028.1,301.0 2037.9,300.6 2047.8,300.3 2057.6,300.0 2067.5,299.6 2077.3,299.3 2087.2,299.0 2097.0,298.7 2106.9,298.4 2116.7,298.1 2126.5,297.9 2136.4,297.6 2146.2,297.3 2156.1,297.1 2165.9,296.8 2176.3,296.5 2187.5,296.2 2198.9,295.9 2210.2,295.6 2220.9,295.3 2230.5,295.0 2238.6,294.8 2244.7,294.6" fill="none" stroke="#ffff00" stroke-width="4" stroke-linejoin="round"/>
<text x="119" y="737.5" font-size="42.5" fill="#ececec" text-anchor="start" textLength="300" lengthAdjust="spacingAndGlyphs" >Avg dE2000: 1,8</text>
<text x="683" y="737.5" font-size="42.5" fill="#ececec" text-anchor="start" textLength="264" lengthAdjust="spacingAndGlyphs" >Avg CCT: 6446</text>
<text x="1186" y="737.5" font-size="42.5" fill="#ececec" text-anchor="start" textLength="404" lengthAdjust="spacingAndGlyphs" >Contrast Ratio: 84411</text>
<text x="1788" y="737.5" font-size="42.5" fill="#ececec" text-anchor="start" textLength="351" lengthAdjust="spacingAndGlyphs" >Total Gamma: 2,22</text>
<rect x="1" y="765" width="2290" height="180" fill="#000"/>
<rect x="338" y="765" width="1756" height="180" fill="#030303" stroke="#0c0c0c" stroke-width="1"/>
<text transform="translate(356,829) rotate(-90)" font-size="16" fill="#f0f0f0" textLength="48" lengthAdjust="spacingAndGlyphs">Actual</text>
<text transform="translate(356,906) rotate(-90)" font-size="16" fill="#f0f0f0" textLength="47" lengthAdjust="spacingAndGlyphs">Target</text>
<rect x="368" y="774" width="133" height="70" fill="rgb(0,0,0)"/>
<rect x="368" y="844" width="133" height="69" fill="rgb(0,0,0)"/>
<rect x="368" y="774" width="133" height="139" fill="none" stroke="#f4f4f4" stroke-width="2"/>
<text x="434.5" y="933" font-size="16" fill="#f4f4f4" text-anchor="middle" >0</text>
<rect x="526" y="774" width="133" height="70" fill="rgb(25,25,25)"/>
<rect x="526" y="844" width="133" height="69" fill="rgb(28,28,28)"/>
<rect x="526" y="774" width="133" height="139" fill="none" stroke="#f4f4f4" stroke-width="2"/>
<text x="592.5" y="933" font-size="16" fill="#f4f4f4" text-anchor="middle" >10</text>
<rect x="684" y="774" width="133" height="70" fill="rgb(50,50,50)"/>
<rect x="684" y="844" width="133" height="69" fill="rgb(52,52,52)"/>
<rect x="684" y="774" width="133" height="139" fill="none" stroke="#f4f4f4" stroke-width="2"/>
<text x="750.5" y="933" font-size="16" fill="#f4f4f4" text-anchor="middle" >20</text>
<rect x="842" y="774" width="133" height="70" fill="rgb(75,75,75)"/>
<rect x="842" y="844" width="133" height="69" fill="rgb(77,77,77)"/>
<rect x="842" y="774" width="133" height="139" fill="none" stroke="#f4f4f4" stroke-width="2"/>
<text x="908.5" y="933" font-size="16" fill="#f4f4f4" text-anchor="middle" >30</text>
<rect x="1000" y="774" width="133" height="70" fill="rgb(102,102,102)"/>
<rect x="1000" y="844" width="133" height="69" fill="rgb(102,102,102)"/>
<rect x="1000" y="774" width="133" height="139" fill="none" stroke="#f4f4f4" stroke-width="2"/>
<text x="1066.5" y="933" font-size="16" fill="#f4f4f4" text-anchor="middle" >40</text>
<rect x="1158" y="774" width="133" height="70" fill="rgb(128,128,128)"/>
<rect x="1158" y="844" width="133" height="69" fill="rgb(128,128,128)"/>
<rect x="1158" y="774" width="133" height="139" fill="none" stroke="#f4f4f4" stroke-width="2"/>
<text x="1224.5" y="933" font-size="16" fill="#f4f4f4" text-anchor="middle" >50</text>
<rect x="1316" y="774" width="133" height="70" fill="rgb(153,153,153)"/>
<rect x="1316" y="844" width="133" height="69" fill="rgb(153,153,153)"/>
<rect x="1316" y="774" width="133" height="139" fill="none" stroke="#f4f4f4" stroke-width="2"/>
<text x="1382.5" y="933" font-size="16" fill="#f4f4f4" text-anchor="middle" >60</text>
<rect x="1474" y="774" width="133" height="70" fill="rgb(178,178,178)"/>
<rect x="1474" y="844" width="133" height="69" fill="rgb(179,179,179)"/>
<rect x="1474" y="774" width="133" height="139" fill="none" stroke="#f4f4f4" stroke-width="2"/>
<text x="1540.5" y="933" font-size="16" fill="#f4f4f4" text-anchor="middle" >70</text>
<rect x="1632" y="774" width="133" height="70" fill="rgb(204,204,204)"/>
<rect x="1632" y="844" width="133" height="69" fill="rgb(204,204,204)"/>
<rect x="1632" y="774" width="133" height="139" fill="none" stroke="#f4f4f4" stroke-width="2"/>
<text x="1698.5" y="933" font-size="16" fill="#f4f4f4" text-anchor="middle" >80</text>
<rect x="1790" y="774" width="133" height="70" fill="rgb(229,229,229)"/>
<rect x="1790" y="844" width="133" height="69" fill="rgb(230,230,230)"/>
<rect x="1790" y="774" width="133" height="139" fill="none" stroke="#f4f4f4" stroke-width="2"/>
<text x="1856.5" y="933" font-size="16" fill="#f4f4f4" text-anchor="middle" >90</text>
<rect x="1948" y="774" width="133" height="70" fill="rgb(255,255,255)"/>
<rect x="1948" y="844" width="133" height="69" fill="rgb(255,255,255)"/>
<rect x="1948" y="774" width="133" height="139" fill="none" stroke="#f4f4f4" stroke-width="2"/>
<text x="2014.5" y="933" font-size="16" fill="#f4f4f4" text-anchor="middle" >100</text>
<text x="21" y="1017.5" font-size="40.7" fill="#ececec" text-anchor="start" textLength="301" lengthAdjust="spacingAndGlyphs" >Current Reading</text>
<text x="21" y="1075.5" font-size="32.8" fill="#ececec" text-anchor="start" textLength="141" lengthAdjust="spacingAndGlyphs" >x: 0,3147</text>
<text x="21" y="1131.5" font-size="32.8" fill="#ececec" text-anchor="start" textLength="142" lengthAdjust="spacingAndGlyphs" >y: 0,3327</text>
<text x="21" y="1188" font-size="32.8" fill="#ececec" text-anchor="start" textLength="153" lengthAdjust="spacingAndGlyphs" >fL: 233,75</text>
<text x="21" y="1244.5" font-size="32.8" fill="#ececec" text-anchor="start" textLength="219" lengthAdjust="spacingAndGlyphs" >cd/m²: 800,89</text>
<rect x="450" y="975" width="402" height="294" fill="#1d1d1d"/>
<rect x="460" y="984" width="383" height="279" fill="#2e2e2e"/>
<defs>
<clipPath id="cieclip"><rect x="511" y="988.5" width="328" height="236.5"/></clipPath>
<linearGradient id="cie1" x1="0" y1="0" x2="1" y2="1">
<stop offset="0" stop-color="#7ff7c4"/><stop offset="0.5" stop-color="#ffffff"/><stop offset="1" stop-color="#ff8fb6"/></linearGradient>
<radialGradient id="cieY" cx="1" cy="0" r="0.9"><stop offset="0" stop-color="#ffe0a8"/><stop offset="0.3" stop-color="#fffcc8" stop-opacity="0.9"/><stop offset="1" stop-color="#ffffe0" stop-opacity="0"/></radialGradient>
<radialGradient id="cieC" cx="0" cy="0.45" r="0.6"><stop offset="0" stop-color="#a8fffc"/><stop offset="1" stop-color="#d0ffff" stop-opacity="0"/></radialGradient>
<radialGradient id="cieB" cx="0" cy="1" r="0.7"><stop offset="0" stop-color="#aac4ff"/><stop offset="1" stop-color="#c8d8ff" stop-opacity="0"/></radialGradient>
<radialGradient id="cieP" cx="0.45" cy="1" r="0.5"><stop offset="0" stop-color="#fdc8ff"/><stop offset="1" stop-color="#ffe0ff" stop-opacity="0"/></radialGradient>
<radialGradient id="cieW" cx="0.48" cy="0.55" r="0.3"><stop offset="0" stop-color="#ffffff"/><stop offset="1" stop-color="#ffffff" stop-opacity="0"/></radialGradient>
</defs>
<g clip-path="url(#cieclip)">
<defs><linearGradient id="cs0"><stop offset="0.0" stop-color="#80fac9"/><stop offset="0.25" stop-color="#a8fcc1"/><stop offset="0.5" stop-color="#d8ffc9"/><stop offset="0.75" stop-color="#fdffc9"/><stop offset="1.0" stop-color="#ffdfa8"/></linearGradient><linearGradient id="cs1"><stop offset="0.0" stop-color="#81faca"/><stop offset="0.25" stop-color="#a9fcc4"/><stop offset="0.5" stop-color="#d9ffcc"/><stop offset="0.75" stop-color="#fdfeca"/><stop offset="1.0" stop-color="#ffdea9"/></linearGradient><linearGradient id="cs2"><stop offset="0.0" stop-color="#82facc"/><stop offset="0.25" stop-color="#aafcc6"/><stop offset="0.5" stop-color="#daffce"/><stop offset="0.75" stop-color="#fefdcc"/><stop offset="1.0" stop-color="#ffddaa"/></linearGradient><linearGradient id="cs3"><stop offset="0.0" stop-color="#83fbce"/><stop offset="0.25" stop-color="#abfcc8"/><stop offset="0.5" stop-color="#dbffd0"/><stop offset="0.75" stop-color="#fefdce"/><stop offset="1.0" stop-color="#ffdcab"/></linearGradient><linearGradient id="cs4"><stop offset="0.0" stop-color="#84fbcf"/><stop offset="0.25" stop-color="#acfccb"/><stop offset="0.5" stop-color="#dcffd3"/><stop offset="0.75" stop-color="#fefccf"/><stop offset="1.0" stop-color="#ffdbac"/></linearGradient><linearGradient id="cs5"><stop offset="0.0" stop-color="#84fbd1"/><stop offset="0.25" stop-color="#acfccd"/><stop offset="0.5" stop-color="#dcffd5"/><stop offset="0.75" stop-color="#fefbd1"/><stop offset="1.0" stop-color="#ffd9ac"/></linearGradient><linearGradient id="cs6"><stop offset="0.0" stop-color="#85fbd2"/><stop offset="0.25" stop-color="#adfcd0"/><stop offset="0.5" stop-color="#ddffd8"/><stop offset="0.75" stop-color="#fefad2"/><stop offset="1.0" stop-color="#ffd8ad"/></linearGradient><linearGradient id="cs7"><stop offset="0.0" stop-color="#86fcd4"/><stop offset="0.25" stop-color="#aefcd2"/><stop offset="0.5" stop-color="#deffda"/><stop offset="0.75" stop-color="#fefad4"/><stop offset="1.0" stop-color="#ffd7ae"/></linearGradient><linearGradient id="cs8"><stop offset="0.0" stop-color="#87fcd6"/><stop offset="0.25" stop-color="#affcd4"/><stop offset="0.5" stop-color="#dfffdc"/><stop offset="0.75" stop-color="#fff9d6"/><stop offset="1.0" stop-color="#ffd6af"/></linearGradient><linearGradient id="cs9"><stop offset="0.0" stop-color="#88fcd7"/><stop offset="0.25" stop-color="#b0fcd7"/><stop offset="0.5" stop-color="#e0ffdf"/><stop offset="0.75" stop-color="#fff8d7"/><stop offset="1.0" stop-color="#ffd5b0"/></linearGradient><linearGradient id="cs10"><stop offset="0.0" stop-color="#89fcda"/><stop offset="0.25" stop-color="#b1fcda"/><stop offset="0.5" stop-color="#e1ffe1"/><stop offset="0.75" stop-color="#fff7d8"/><stop offset="1.0" stop-color="#ffd3b0"/></linearGradient><linearGradient id="cs11"><stop offset="0.0" stop-color="#8afcdd"/><stop offset="0.25" stop-color="#b4fcdd"/><stop offset="0.5" stop-color="#e4ffe4"/><stop offset="0.75" stop-color="#fff6d9"/><stop offset="1.0" stop-color="#ffd1b1"/></linearGradient><linearGradient id="cs12"><stop offset="0.0" stop-color="#8cfce0"/><stop offset="0.25" stop-color="#b6fce0"/><stop offset="0.5" stop-color="#e6fee7"/><stop offset="0.75" stop-color="#fff4da"/><stop offset="1.0" stop-color="#ffcfb2"/></linearGradient><linearGradient id="cs13"><stop offset="0.0" stop-color="#8efce3"/><stop offset="0.25" stop-color="#b8fce3"/><stop offset="0.5" stop-color="#e8feea"/><stop offset="0.75" stop-color="#fff2db"/><stop offset="1.0" stop-color="#ffcdb3"/></linearGradient><linearGradient id="cs14"><stop offset="0.0" stop-color="#8ffce6"/><stop offset="0.25" stop-color="#bbfce6"/><stop offset="0.5" stop-color="#ebfeed"/><stop offset="0.75" stop-color="#fff1dc"/><stop offset="1.0" stop-color="#ffcbb4"/></linearGradient><linearGradient id="cs15"><stop offset="0.0" stop-color="#91fcea"/><stop offset="0.25" stop-color="#bdfcea"/><stop offset="0.5" stop-color="#edfdef"/><stop offset="0.75" stop-color="#ffefdc"/><stop offset="1.0" stop-color="#ffc9b4"/></linearGradient><linearGradient id="cs16"><stop offset="0.0" stop-color="#92fced"/><stop offset="0.25" stop-color="#c0fced"/><stop offset="0.5" stop-color="#f0fdf2"/><stop offset="0.75" stop-color="#ffeedd"/><stop offset="1.0" stop-color="#ffc7b5"/></linearGradient><linearGradient id="cs17"><stop offset="0.0" stop-color="#94fcf0"/><stop offset="0.25" stop-color="#c2fcf0"/><stop offset="0.5" stop-color="#f2fdf5"/><stop offset="0.75" stop-color="#ffecde"/><stop offset="1.0" stop-color="#ffc5b6"/></linearGradient><linearGradient id="cs18"><stop offset="0.0" stop-color="#96fcf3"/><stop offset="0.25" stop-color="#c4fcf3"/><stop offset="0.5" stop-color="#f4fcf8"/><stop offset="0.75" stop-color="#ffeadf"/><stop offset="1.0" stop-color="#ffc3b7"/></linearGradient><linearGradient id="cs19"><stop offset="0.0" stop-color="#97fcf6"/><stop offset="0.25" stop-color="#c7fcf6"/><stop offset="0.5" stop-color="#f7fcfb"/><stop offset="0.75" stop-color="#ffe9e0"/><stop offset="1.0" stop-color="#ffc1b8"/></linearGradient><linearGradient id="cs20"><stop offset="0.0" stop-color="#99fbf8"/><stop offset="0.25" stop-color="#c9fbf8"/><stop offset="0.5" stop-color="#f8fbfc"/><stop offset="0.75" stop-color="#ffe6e0"/><stop offset="1.0" stop-color="#ffbfb8"/></linearGradient><linearGradient id="cs21"><stop offset="0.0" stop-color="#9af8f9"/><stop offset="0.25" stop-color="#caf9f9"/><stop offset="0.5" stop-color="#f9f9fc"/><stop offset="0.75" stop-color="#ffe3e0"/><stop offset="1.0" stop-color="#ffbcb9"/></linearGradient><linearGradient id="cs22"><stop offset="0.0" stop-color="#9cf5fa"/><stop offset="0.25" stop-color="#ccf7fa"/><stop offset="0.5" stop-color="#faf7fd"/><stop offset="0.75" stop-color="#ffe0e0"/><stop offset="1.0" stop-color="#ffbaba"/></linearGradient><linearGradient id="cs23"><stop offset="0.0" stop-color="#9ef2fa"/><stop offset="0.25" stop-color="#cef5fa"/><stop offset="0.5" stop-color="#faf5fd"/><stop offset="0.75" stop-color="#ffdde0"/><stop offset="1.0" stop-color="#ffb8bb"/></linearGradient><linearGradient id="cs24"><stop offset="0.0" stop-color="#9feffb"/><stop offset="0.25" stop-color="#cff3fb"/><stop offset="0.5" stop-color="#fbf3fd"/><stop offset="0.75" stop-color="#ffdae0"/><stop offset="1.0" stop-color="#ffb5bc"/></linearGradient><linearGradient id="cs25"><stop offset="0.0" stop-color="#a1edfc"/><stop offset="0.25" stop-color="#d1f1fc"/><stop offset="0.5" stop-color="#fcf1fe"/><stop offset="0.75" stop-color="#ffd6e0"/><stop offset="1.0" stop-color="#ffb3bc"/></linearGradient><linearGradient id="cs26"><stop offset="0.0" stop-color="#a2eafd"/><stop offset="0.25" stop-color="#d2effd"/><stop offset="0.5" stop-color="#fdeffe"/><stop offset="0.75" stop-color="#ffd3e0"/><stop offset="1.0" stop-color="#ffb0bd"/></linearGradient><linearGradient id="cs27"><stop offset="0.0" stop-color="#a4e7fd"/><stop offset="0.25" stop-color="#d4edfd"/><stop offset="0.5" stop-color="#fdedfe"/><stop offset="0.75" stop-color="#ffd0e0"/><stop offset="1.0" stop-color="#ffaebe"/></linearGradient><linearGradient id="cs28"><stop offset="0.0" stop-color="#a6e4fe"/><stop offset="0.25" stop-color="#d6ebfe"/><stop offset="0.5" stop-color="#feebff"/><stop offset="0.75" stop-color="#ffcde0"/><stop offset="1.0" stop-color="#ffacbf"/></linearGradient><linearGradient id="cs29"><stop offset="0.0" stop-color="#a7e1ff"/><stop offset="0.25" stop-color="#d7e9ff"/><stop offset="0.5" stop-color="#ffe9ff"/><stop offset="0.75" stop-color="#ffcae0"/><stop offset="1.0" stop-color="#ffa9c0"/></linearGradient><linearGradient id="cs30"><stop offset="0.0" stop-color="#a8dfff"/><stop offset="0.25" stop-color="#d8e6ff"/><stop offset="0.5" stop-color="#ffe6ff"/><stop offset="0.75" stop-color="#ffc7e0"/><stop offset="1.0" stop-color="#ffa7c0"/></linearGradient><linearGradient id="cs31"><stop offset="0.0" stop-color="#a9dcff"/><stop offset="0.25" stop-color="#d7e3ff"/><stop offset="0.5" stop-color="#fee3ff"/><stop offset="0.75" stop-color="#ffc4df"/><stop offset="1.0" stop-color="#ffa4bf"/></linearGradient><linearGradient id="cs32"><stop offset="0.0" stop-color="#aadaff"/><stop offset="0.25" stop-color="#d6e0ff"/><stop offset="0.5" stop-color="#fde0fe"/><stop offset="0.75" stop-color="#ffc2de"/><stop offset="1.0" stop-color="#ffa2be"/></linearGradient><linearGradient id="cs33"><stop offset="0.0" stop-color="#abd8ff"/><stop offset="0.25" stop-color="#d5ddff"/><stop offset="0.5" stop-color="#fdddfe"/><stop offset="0.75" stop-color="#ffc0dd"/><stop offset="1.0" stop-color="#ffa0bd"/></linearGradient><linearGradient id="cs34"><stop offset="0.0" stop-color="#acd5ff"/><stop offset="0.25" stop-color="#d4daff"/><stop offset="0.5" stop-color="#fcdafe"/><stop offset="0.75" stop-color="#ffbddc"/><stop offset="1.0" stop-color="#ff9dbc"/></linearGradient><linearGradient id="cs35"><stop offset="0.0" stop-color="#acd3ff"/><stop offset="0.25" stop-color="#d4d6ff"/><stop offset="0.5" stop-color="#fbd6fd"/><stop offset="0.75" stop-color="#ffbbdc"/><stop offset="1.0" stop-color="#ff9bbc"/></linearGradient><linearGradient id="cs36"><stop offset="0.0" stop-color="#add0ff"/><stop offset="0.25" stop-color="#d3d3ff"/><stop offset="0.5" stop-color="#fad3fd"/><stop offset="0.75" stop-color="#ffb8db"/><stop offset="1.0" stop-color="#ff98bb"/></linearGradient><linearGradient id="cs37"><stop offset="0.0" stop-color="#aeceff"/><stop offset="0.25" stop-color="#d2d0ff"/><stop offset="0.5" stop-color="#fad0fd"/><stop offset="0.75" stop-color="#ffb6da"/><stop offset="1.0" stop-color="#ff96ba"/></linearGradient><linearGradient id="cs38"><stop offset="0.0" stop-color="#afccff"/><stop offset="0.25" stop-color="#d1cdff"/><stop offset="0.5" stop-color="#f9cdfc"/><stop offset="0.75" stop-color="#ffb4d9"/><stop offset="1.0" stop-color="#ff94b9"/></linearGradient><linearGradient id="cs39"><stop offset="0.0" stop-color="#b0c9ff"/><stop offset="0.25" stop-color="#d0caff"/><stop offset="0.5" stop-color="#f8cafc"/><stop offset="0.75" stop-color="#ffb1d8"/><stop offset="1.0" stop-color="#ff91b8"/></linearGradient></defs>
<rect x="511" y="989" width="328" height="6" fill="url(#cs0)" shape-rendering="crispEdges"/>
<rect x="511" y="995" width="328" height="6" fill="url(#cs1)" shape-rendering="crispEdges"/>
<rect x="511" y="1001" width="328" height="6" fill="url(#cs2)" shape-rendering="crispEdges"/>
<rect x="511" y="1007" width="328" height="6" fill="url(#cs3)" shape-rendering="crispEdges"/>
<rect x="511" y="1013" width="328" height="6" fill="url(#cs4)" shape-rendering="crispEdges"/>
<rect x="511" y="1019" width="328" height="6" fill="url(#cs5)" shape-rendering="crispEdges"/>
<rect x="511" y="1025" width="328" height="6" fill="url(#cs6)" shape-rendering="crispEdges"/>
<rect x="511" y="1031" width="328" height="6" fill="url(#cs7)" shape-rendering="crispEdges"/>
<rect x="511" y="1037" width="328" height="6" fill="url(#cs8)" shape-rendering="crispEdges"/>
<rect x="511" y="1043" width="328" height="6" fill="url(#cs9)" shape-rendering="crispEdges"/>
<rect x="511" y="1049" width="328" height="6" fill="url(#cs10)" shape-rendering="crispEdges"/>
<rect x="511" y="1055" width="328" height="6" fill="url(#cs11)" shape-rendering="crispEdges"/>
<rect x="511" y="1061" width="328" height="6" fill="url(#cs12)" shape-rendering="crispEdges"/>
<rect x="511" y="1067" width="328" height="6" fill="url(#cs13)" shape-rendering="crispEdges"/>
<rect x="511" y="1073" width="328" height="6" fill="url(#cs14)" shape-rendering="crispEdges"/>
<rect x="511" y="1079" width="328" height="6" fill="url(#cs15)" shape-rendering="crispEdges"/>
<rect x="511" y="1085" width="328" height="6" fill="url(#cs16)" shape-rendering="crispEdges"/>
<rect x="511" y="1091" width="328" height="6" fill="url(#cs17)" shape-rendering="crispEdges"/>
<rect x="511" y="1097" width="328" height="6" fill="url(#cs18)" shape-rendering="crispEdges"/>
<rect x="511" y="1103" width="328" height="6" fill="url(#cs19)" shape-rendering="crispEdges"/>
<rect x="511" y="1109" width="328" height="6" fill="url(#cs20)" shape-rendering="crispEdges"/>
<rect x="511" y="1115" width="328" height="6" fill="url(#cs21)" shape-rendering="crispEdges"/>
<rect x="511" y="1121" width="328" height="6" fill="url(#cs22)" shape-rendering="crispEdges"/>
<rect x="511" y="1127" width="328" height="6" fill="url(#cs23)" shape-rendering="crispEdges"/>
<rect x="511" y="1133" width="328" height="6" fill="url(#cs24)" shape-rendering="crispEdges"/>
<rect x="511" y="1139" width="328" height="6" fill="url(#cs25)" shape-rendering="crispEdges"/>
<rect x="511" y="1145" width="328" height="6" fill="url(#cs26)" shape-rendering="crispEdges"/>
<rect x="511" y="1151" width="328" height="6" fill="url(#cs27)" shape-rendering="crispEdges"/>
<rect x="511" y="1157" width="328" height="6" fill="url(#cs28)" shape-rendering="crispEdges"/>
<rect x="511" y="1163" width="328" height="6" fill="url(#cs29)" shape-rendering="crispEdges"/>
<rect x="511" y="1169" width="328" height="6" fill="url(#cs30)" shape-rendering="crispEdges"/>
<rect x="511" y="1175" width="328" height="6" fill="url(#cs31)" shape-rendering="crispEdges"/>
<rect x="511" y="1181" width="328" height="6" fill="url(#cs32)" shape-rendering="crispEdges"/>
<rect x="511" y="1187" width="328" height="6" fill="url(#cs33)" shape-rendering="crispEdges"/>
<rect x="511" y="1193" width="328" height="6" fill="url(#cs34)" shape-rendering="crispEdges"/>
<rect x="511" y="1199" width="328" height="6" fill="url(#cs35)" shape-rendering="crispEdges"/>
<rect x="511" y="1205" width="328" height="6" fill="url(#cs36)" shape-rendering="crispEdges"/>
<rect x="511" y="1211" width="328" height="6" fill="url(#cs37)" shape-rendering="crispEdges"/>
<rect x="511" y="1217" width="328" height="6" fill="url(#cs38)" shape-rendering="crispEdges"/>
<rect x="511" y="1223" width="328" height="6" fill="url(#cs39)" shape-rendering="crispEdges"/>
<polyline points="545.0,1232.1 555.0,1224.2 565.0,1216.3 575.0,1208.5 585.0,1200.7 595.0,1193.0 605.0,1185.4 615.0,1177.9 625.0,1170.4 635.0,1163.0 645.0,1155.6 655.0,1148.4 665.0,1141.2 675.0,1134.0 685.0,1126.9 695.0,1119.9 705.0,1113.0 715.0,1106.2 725.0,1099.4 735.0,1092.6 745.0,1086.0 755.0,1079.4 765.0,1072.9 775.0,1066.4 785.0,1060.0 795.0,1053.7 805.0,1047.4 815.0,1041.3 825.0,1035.2 835.0,1029.1 845.0,1023.1" fill="none" stroke="#000" stroke-width="3.2" stroke-linejoin="round"/>
</g>
<rect x="511" y="988.5" width="328" height="236.5" fill="none" stroke="#8e8e8e" stroke-width="2"/>
<rect x="503" y="1005.95" width="7" height="1.5" fill="#d8d8d8"/>
<text x="502" y="1013.2" font-size="18.5" fill="#d8d8d8" text-anchor="end" textLength="39" lengthAdjust="spacingAndGlyphs" >0,35</text>
<rect x="503" y="1054.75" width="7" height="1.5" fill="#d8d8d8"/>
<text x="502" y="1062.0" font-size="18.5" fill="#d8d8d8" text-anchor="end" textLength="39" lengthAdjust="spacingAndGlyphs" >0,34</text>
<rect x="503" y="1101.45" width="7" height="1.5" fill="#d8d8d8"/>
<text x="502" y="1108.7" font-size="18.5" fill="#d8d8d8" text-anchor="end" textLength="39" lengthAdjust="spacingAndGlyphs" >0,33</text>
<rect x="503" y="1148.15" width="7" height="1.5" fill="#d8d8d8"/>
<text x="502" y="1155.4" font-size="18.5" fill="#d8d8d8" text-anchor="end" textLength="39" lengthAdjust="spacingAndGlyphs" >0,32</text>
<rect x="503" y="1195.15" width="7" height="1.5" fill="#d8d8d8"/>
<text x="502" y="1202.4" font-size="18.5" fill="#d8d8d8" text-anchor="end" textLength="39" lengthAdjust="spacingAndGlyphs" >0,31</text>
<rect x="524.15" y="1226" width="1.5" height="7" fill="#d8d8d8"/>
<text x="524.9" y="1254" font-size="18.5" fill="#d8d8d8" text-anchor="middle" textLength="39" lengthAdjust="spacingAndGlyphs" >0,29</text>
<rect x="589.25" y="1226" width="1.5" height="7" fill="#d8d8d8"/>
<text x="590" y="1254" font-size="18.5" fill="#d8d8d8" text-anchor="middle" textLength="26" lengthAdjust="spacingAndGlyphs" >0,3</text>
<rect x="654.45" y="1226" width="1.5" height="7" fill="#d8d8d8"/>
<text x="655.2" y="1254" font-size="18.5" fill="#d8d8d8" text-anchor="middle" textLength="39" lengthAdjust="spacingAndGlyphs" >0,31</text>
<rect x="720.15" y="1226" width="1.5" height="7" fill="#d8d8d8"/>
<text x="720.9" y="1254" font-size="18.5" fill="#d8d8d8" text-anchor="middle" textLength="39" lengthAdjust="spacingAndGlyphs" >0,32</text>
<rect x="785.35" y="1226" width="1.5" height="7" fill="#d8d8d8"/>
<text x="786.1" y="1254" font-size="18.5" fill="#d8d8d8" text-anchor="middle" textLength="39" lengthAdjust="spacingAndGlyphs" >0,33</text>
<rect x="665.6" y="1100" width="16.8" height="15.7" fill="#fff" stroke="#000" stroke-width="1.8"/>
<circle cx="673" cy="1094.5" r="5.4" fill="#555" stroke="#000" stroke-width="1.3"/>
<circle cx="679.9" cy="1094.5" r="5.4" fill="#3a3a3a" stroke="#000" stroke-width="1.3"/>
<circle cx="694.8" cy="1091.3" r="5.4" fill="#222" stroke="#000" stroke-width="1.3"/>
<circle cx="672.1" cy="1089.3" r="5.4" fill="#a8a8a8" stroke="#000" stroke-width="1.3"/>
<circle cx="664.1" cy="1096.8" r="5.4" fill="#999" stroke="#000" stroke-width="1.3"/>
<circle cx="679.3" cy="1081.3" r="5.4" fill="#cccccc" stroke="#000" stroke-width="1.3"/>
<circle cx="680.5" cy="1085.3" r="5.4" fill="#e8e8e8" stroke="#000" stroke-width="1.3"/>
<circle cx="687.6" cy="1087" r="5.4" fill="#ffffff" stroke="#000" stroke-width="1.3"/>
<rect x="862" y="956" width="1320" height="288.5" fill="#000"/>
<rect x="864" y="958" width="1316" height="19" fill="#2e2e2e"/>
<rect x="864" y="977" width="1316" height="19" fill="#161616"/>
<text x="1122.6" y="985" font-size="20.5" fill="#f4f4f4" text-anchor="middle" stroke="#f4f4f4" stroke-width="0.3">0</text>
<text x="1223.3" y="985" font-size="20.5" fill="#f4f4f4" text-anchor="middle" stroke="#f4f4f4" stroke-width="0.3">10</text>
<text x="1324.0" y="985" font-size="20.5" fill="#f4f4f4" text-anchor="middle" stroke="#f4f4f4" stroke-width="0.3">20</text>
<text x="1424.6999999999998" y="985" font-size="20.5" fill="#f4f4f4" text-anchor="middle" stroke="#f4f4f4" stroke-width="0.3">30</text>
<text x="1525.3999999999999" y="985" font-size="20.5" fill="#f4f4f4" text-anchor="middle" stroke="#f4f4f4" stroke-width="0.3">40</text>
<text x="1626.1" y="985" font-size="20.5" fill="#f4f4f4" text-anchor="middle" stroke="#f4f4f4" stroke-width="0.3">50</text>
<text x="1726.8" y="985" font-size="20.5" fill="#f4f4f4" text-anchor="middle" stroke="#f4f4f4" stroke-width="0.3">60</text>
<text x="1827.5" y="985" font-size="20.5" fill="#f4f4f4" text-anchor="middle" stroke="#f4f4f4" stroke-width="0.3">70</text>
<text x="1928.1999999999998" y="985" font-size="20.5" fill="#f4f4f4" text-anchor="middle" stroke="#f4f4f4" stroke-width="0.3">80</text>
<text x="2028.9" y="985" font-size="20.5" fill="#f4f4f4" text-anchor="middle" stroke="#f4f4f4" stroke-width="0.3">90</text>
<text x="2129.6" y="985" font-size="20.5" fill="#f4f4f4" text-anchor="middle" stroke="#f4f4f4" stroke-width="0.3">100</text>
<rect x="864" y="996.0" width="1316" height="35.5" fill="#414141"/>
<text x="880" y="1022.0" font-size="22.5" fill="#f2f2f2" text-anchor="start" font-weight="bold" textLength="82.6" lengthAdjust="spacingAndGlyphs" >x: CIE31</text>
<text x="1078.3" y="1022.0" font-size="22" fill="#f2f2f2" text-anchor="start" textLength="52.9" lengthAdjust="spacingAndGlyphs" >0,417</text>
<text x="1179.0" y="1022.0" font-size="22" fill="#f2f2f2" text-anchor="start" textLength="52.9" lengthAdjust="spacingAndGlyphs" >0,316</text>
<text x="1279.7" y="1022.0" font-size="22" fill="#f2f2f2" text-anchor="start" textLength="52.9" lengthAdjust="spacingAndGlyphs" >0,314</text>
<text x="1380.4" y="1022.0" font-size="22" fill="#f2f2f2" text-anchor="start" textLength="52.9" lengthAdjust="spacingAndGlyphs" >0,314</text>
<text x="1481.1" y="1022.0" font-size="22" fill="#f2f2f2" text-anchor="start" textLength="52.9" lengthAdjust="spacingAndGlyphs" >0,313</text>
<text x="1581.8" y="1022.0" font-size="22" fill="#f2f2f2" text-anchor="start" textLength="52.9" lengthAdjust="spacingAndGlyphs" >0,312</text>
<text x="1682.5" y="1022.0" font-size="22" fill="#f2f2f2" text-anchor="start" textLength="52.9" lengthAdjust="spacingAndGlyphs" >0,311</text>
<text x="1783.1999999999998" y="1022.0" font-size="22" fill="#f2f2f2" text-anchor="start" textLength="52.9" lengthAdjust="spacingAndGlyphs" >0,312</text>
<text x="1883.9" y="1022.0" font-size="22" fill="#f2f2f2" text-anchor="start" textLength="52.9" lengthAdjust="spacingAndGlyphs" >0,314</text>
<text x="1984.6" y="1022.0" font-size="22" fill="#f2f2f2" text-anchor="start" textLength="52.9" lengthAdjust="spacingAndGlyphs" >0,314</text>
<text x="2085.3" y="1022.0" font-size="22" fill="#f2f2f2" text-anchor="start" textLength="52.9" lengthAdjust="spacingAndGlyphs" >0,315</text>
<rect x="864" y="1031.5" width="1316" height="35.5" fill="#7f7f7f"/>
<text x="880" y="1057.5" font-size="22.5" fill="#ececec" text-anchor="start" font-weight="bold" textLength="82.6" lengthAdjust="spacingAndGlyphs" >y: CIE31</text>
<text x="1078.3" y="1057.5" font-size="22" fill="#ececec" text-anchor="start" textLength="52.9" lengthAdjust="spacingAndGlyphs" >0,445</text>
<text x="1179.0" y="1057.5" font-size="22" fill="#ececec" text-anchor="start" textLength="52.9" lengthAdjust="spacingAndGlyphs" >0,332</text>
<text x="1279.7" y="1057.5" font-size="22" fill="#ececec" text-anchor="start" textLength="52.9" lengthAdjust="spacingAndGlyphs" >0,332</text>
<text x="1380.4" y="1057.5" font-size="22" fill="#ececec" text-anchor="start" textLength="52.9" lengthAdjust="spacingAndGlyphs" >0,332</text>
<text x="1481.1" y="1057.5" font-size="22" fill="#ececec" text-anchor="start" textLength="52.9" lengthAdjust="spacingAndGlyphs" >0,332</text>
<text x="1581.8" y="1057.5" font-size="22" fill="#ececec" text-anchor="start" textLength="52.9" lengthAdjust="spacingAndGlyphs" >0,332</text>
<text x="1682.5" y="1057.5" font-size="22" fill="#ececec" text-anchor="start" textLength="52.9" lengthAdjust="spacingAndGlyphs" >0,331</text>
<text x="1783.1999999999998" y="1057.5" font-size="22" fill="#ececec" text-anchor="start" textLength="52.9" lengthAdjust="spacingAndGlyphs" >0,332</text>
<text x="1883.9" y="1057.5" font-size="22" fill="#ececec" text-anchor="start" textLength="52.9" lengthAdjust="spacingAndGlyphs" >0,334</text>
<text x="1984.6" y="1057.5" font-size="22" fill="#ececec" text-anchor="start" textLength="52.9" lengthAdjust="spacingAndGlyphs" >0,333</text>
<text x="2085.3" y="1057.5" font-size="22" fill="#ececec" text-anchor="start" textLength="52.9" lengthAdjust="spacingAndGlyphs" >0,333</text>
<rect x="864" y="1067.0" width="1316" height="35.5" fill="#414141"/>
<text x="880" y="1093.0" font-size="22.5" fill="#f2f2f2" text-anchor="start" font-weight="bold" textLength="14.1" lengthAdjust="spacingAndGlyphs" >Y</text>
<text x="1078.3" y="1093.0" font-size="22" fill="#f2f2f2" text-anchor="start" textLength="52.9" lengthAdjust="spacingAndGlyphs" >0,009</text>
<text x="1179.0" y="1093.0" font-size="22" fill="#f2f2f2" text-anchor="start" textLength="52.9" lengthAdjust="spacingAndGlyphs" >5,764</text>
<text x="1279.7" y="1093.0" font-size="22" fill="#f2f2f2" text-anchor="start" textLength="64.6" lengthAdjust="spacingAndGlyphs" >24,315</text>
<text x="1380.4" y="1093.0" font-size="22" fill="#f2f2f2" text-anchor="start" textLength="64.6" lengthAdjust="spacingAndGlyphs" >57,914</text>
<text x="1481.1" y="1093.0" font-size="22" fill="#f2f2f2" text-anchor="start" textLength="76.3" lengthAdjust="spacingAndGlyphs" >106,699</text>
<text x="1581.8" y="1093.0" font-size="22" fill="#f2f2f2" text-anchor="start" textLength="76.3" lengthAdjust="spacingAndGlyphs" >172,537</text>
<text x="1682.5" y="1093.0" font-size="22" fill="#f2f2f2" text-anchor="start" textLength="76.3" lengthAdjust="spacingAndGlyphs" >255,762</text>
<text x="1783.1999999999998" y="1093.0" font-size="22" fill="#f2f2f2" text-anchor="start" textLength="76.3" lengthAdjust="spacingAndGlyphs" >352,514</text>
<text x="1883.9" y="1093.0" font-size="22" fill="#f2f2f2" text-anchor="start" textLength="76.3" lengthAdjust="spacingAndGlyphs" >484,166</text>
<text x="1984.6" y="1093.0" font-size="22" fill="#f2f2f2" text-anchor="start" textLength="76.3" lengthAdjust="spacingAndGlyphs" >634,827</text>
<text x="2085.3" y="1093.0" font-size="22" fill="#f2f2f2" text-anchor="start" textLength="76.3" lengthAdjust="spacingAndGlyphs" >800,894</text>
<rect x="864" y="1102.5" width="1316" height="35.5" fill="#7f7f7f"/>
<text x="880" y="1128.5" font-size="22.5" fill="#ececec" text-anchor="start" font-weight="bold" textLength="88.2" lengthAdjust="spacingAndGlyphs" >Target Y</text>
<text x="1078.3" y="1128.5" font-size="22" fill="#ececec" text-anchor="start" textLength="52.9" lengthAdjust="spacingAndGlyphs" >0,000</text>
<text x="1179.0" y="1128.5" font-size="22" fill="#ececec" text-anchor="start" textLength="52.9" lengthAdjust="spacingAndGlyphs" >8,273</text>
<text x="1279.7" y="1128.5" font-size="22" fill="#ececec" text-anchor="start" textLength="64.6" lengthAdjust="spacingAndGlyphs" >26,513</text>
<text x="1380.4" y="1128.5" font-size="22" fill="#ececec" text-anchor="start" textLength="64.6" lengthAdjust="spacingAndGlyphs" >57,882</text>
<text x="1481.1" y="1128.5" font-size="22" fill="#ececec" text-anchor="start" textLength="76.3" lengthAdjust="spacingAndGlyphs" >106,413</text>
<text x="1581.8" y="1128.5" font-size="22" fill="#ececec" text-anchor="start" textLength="76.3" lengthAdjust="spacingAndGlyphs" >172,881</text>
<text x="1682.5" y="1128.5" font-size="22" fill="#ececec" text-anchor="start" textLength="76.3" lengthAdjust="spacingAndGlyphs" >255,122</text>
<text x="1783.1999999999998" y="1128.5" font-size="22" fill="#ececec" text-anchor="start" textLength="76.3" lengthAdjust="spacingAndGlyphs" >356,559</text>
<text x="1883.9" y="1128.5" font-size="22" fill="#ececec" text-anchor="start" textLength="76.3" lengthAdjust="spacingAndGlyphs" >483,602</text>
<text x="1984.6" y="1128.5" font-size="22" fill="#ececec" text-anchor="start" textLength="76.3" lengthAdjust="spacingAndGlyphs" >633,746</text>
<text x="2085.3" y="1128.5" font-size="22" fill="#ececec" text-anchor="start" textLength="76.3" lengthAdjust="spacingAndGlyphs" >800,894</text>
<rect x="864" y="1138.0" width="1316" height="35.5" fill="#414141"/>
<text x="880" y="1164.0" font-size="22.5" fill="#f2f2f2" text-anchor="start" font-weight="bold" textLength="175.0" lengthAdjust="spacingAndGlyphs" >Gamma Log/Log</text>
<text x="1078.3" y="1164.0" font-size="22" fill="#f2f2f2" text-anchor="start" textLength="52.9" lengthAdjust="spacingAndGlyphs" >1,278</text>
<text x="1179.0" y="1164.0" font-size="22" fill="#f2f2f2" text-anchor="start" textLength="52.9" lengthAdjust="spacingAndGlyphs" >2,161</text>
<text x="1279.7" y="1164.0" font-size="22" fill="#f2f2f2" text-anchor="start" textLength="52.9" lengthAdjust="spacingAndGlyphs" >2,171</text>
<text x="1380.4" y="1164.0" font-size="22" fill="#f2f2f2" text-anchor="start" textLength="52.9" lengthAdjust="spacingAndGlyphs" >2,170</text>
<text x="1481.1" y="1164.0" font-size="22" fill="#f2f2f2" text-anchor="start" textLength="52.9" lengthAdjust="spacingAndGlyphs" >2,200</text>
<text x="1581.8" y="1164.0" font-size="22" fill="#f2f2f2" text-anchor="start" textLength="52.9" lengthAdjust="spacingAndGlyphs" >2,227</text>
<text x="1682.5" y="1164.0" font-size="22" fill="#f2f2f2" text-anchor="start" textLength="52.9" lengthAdjust="spacingAndGlyphs" >2,235</text>
<text x="1783.1999999999998" y="1164.0" font-size="22" fill="#f2f2f2" text-anchor="start" textLength="52.9" lengthAdjust="spacingAndGlyphs" >2,283</text>
<text x="1883.9" y="1164.0" font-size="22" fill="#f2f2f2" text-anchor="start" textLength="52.9" lengthAdjust="spacingAndGlyphs" >2,256</text>
<text x="1984.6" y="1164.0" font-size="22" fill="#f2f2f2" text-anchor="start" textLength="52.9" lengthAdjust="spacingAndGlyphs" >2,252</text>
<text x="2085.3" y="1164.0" font-size="22" fill="#f2f2f2" text-anchor="start" textLength="52.9" lengthAdjust="spacingAndGlyphs" >2,275</text>
<rect x="864" y="1173.5" width="1316" height="35.5" fill="#7f7f7f"/>
<text x="880" y="1199.5" font-size="22.5" fill="#ececec" text-anchor="start" font-weight="bold" textLength="40.2" lengthAdjust="spacingAndGlyphs" >CCT</text>
<text x="1078.3" y="1199.5" font-size="22" fill="#ececec" text-anchor="start" textLength="88.1" lengthAdjust="spacingAndGlyphs" >3657,000</text>
<text x="1179.0" y="1199.5" font-size="22" fill="#ececec" text-anchor="start" textLength="88.1" lengthAdjust="spacingAndGlyphs" >6318,000</text>
<text x="1279.7" y="1199.5" font-size="22" fill="#ececec" text-anchor="start" textLength="88.1" lengthAdjust="spacingAndGlyphs" >6436,000</text>
<text x="1380.4" y="1199.5" font-size="22" fill="#ececec" text-anchor="start" textLength="88.1" lengthAdjust="spacingAndGlyphs" >6433,000</text>
<text x="1481.1" y="1199.5" font-size="22" fill="#ececec" text-anchor="start" textLength="88.1" lengthAdjust="spacingAndGlyphs" >6495,000</text>
<text x="1581.8" y="1199.5" font-size="22" fill="#ececec" text-anchor="start" textLength="88.1" lengthAdjust="spacingAndGlyphs" >6513,000</text>
<text x="1682.5" y="1199.5" font-size="22" fill="#ececec" text-anchor="start" textLength="88.1" lengthAdjust="spacingAndGlyphs" >6571,000</text>
<text x="1783.1999999999998" y="1199.5" font-size="22" fill="#ececec" text-anchor="start" textLength="88.1" lengthAdjust="spacingAndGlyphs" >6496,000</text>
<text x="1883.9" y="1199.5" font-size="22" fill="#ececec" text-anchor="start" textLength="88.1" lengthAdjust="spacingAndGlyphs" >6421,000</text>
<text x="1984.6" y="1199.5" font-size="22" fill="#ececec" text-anchor="start" textLength="88.1" lengthAdjust="spacingAndGlyphs" >6407,000</text>
<text x="2085.3" y="1199.5" font-size="22" fill="#ececec" text-anchor="start" textLength="88.1" lengthAdjust="spacingAndGlyphs" >6371,000</text>
<rect x="864" y="1209.0" width="1316" height="35.5" fill="#414141"/>
<text x="880" y="1235.0" font-size="22.5" fill="#f2f2f2" text-anchor="start" font-weight="bold" textLength="85.7" lengthAdjust="spacingAndGlyphs" >ΔE 2000</text>
<text x="1078.3" y="1235.0" font-size="22" fill="#f2f2f2" text-anchor="start" textLength="52.9" lengthAdjust="spacingAndGlyphs" >0,015</text>
<text x="1179.0" y="1235.0" font-size="22" fill="#f2f2f2" text-anchor="start" textLength="52.9" lengthAdjust="spacingAndGlyphs" >1,723</text>
<text x="1279.7" y="1235.0" font-size="22" fill="#f2f2f2" text-anchor="start" textLength="52.9" lengthAdjust="spacingAndGlyphs" >0,928</text>
<text x="1380.4" y="1235.0" font-size="22" fill="#f2f2f2" text-anchor="start" textLength="52.9" lengthAdjust="spacingAndGlyphs" >0,960</text>
<text x="1481.1" y="1235.0" font-size="22" fill="#f2f2f2" text-anchor="start" textLength="52.9" lengthAdjust="spacingAndGlyphs" >1,195</text>
<text x="1581.8" y="1235.0" font-size="22" fill="#f2f2f2" text-anchor="start" textLength="52.9" lengthAdjust="spacingAndGlyphs" >1,615</text>
<text x="1682.5" y="1235.0" font-size="22" fill="#f2f2f2" text-anchor="start" textLength="52.9" lengthAdjust="spacingAndGlyphs" >1,685</text>
<text x="1783.1999999999998" y="1235.0" font-size="22" fill="#f2f2f2" text-anchor="start" textLength="52.9" lengthAdjust="spacingAndGlyphs" >2,187</text>
<text x="1883.9" y="1235.0" font-size="22" fill="#f2f2f2" text-anchor="start" textLength="52.9" lengthAdjust="spacingAndGlyphs" >2,858</text>
<text x="1984.6" y="1235.0" font-size="22" fill="#f2f2f2" text-anchor="start" textLength="52.9" lengthAdjust="spacingAndGlyphs" >2,468</text>
<text x="2085.3" y="1235.0" font-size="22" fill="#f2f2f2" text-anchor="start" textLength="52.9" lengthAdjust="spacingAndGlyphs" >2,071</text>
<rect x="1132.5" y="1199" width="294" height="21" rx="2" fill="#ffffff" stroke="#9a9a9a" stroke-width="1"/>
<text x="1138" y="1214" font-size="11.5" fill="#2a2a2a" text-anchor="start" textLength="283" lengthAdjust="spacingAndGlyphs" >Daniel Schmidt (tellheim@outlook.com) ist angemeldet.</text>
<rect x="1" y="1328" width="2290" height="64" fill="#2d2d2d"/>
<rect x="1672" y="1329" width="297" height="62" fill="url(#darkbar)"/>
<rect x="2.0" y="1329" width="150" height="61" rx="4" fill="url(#greybtn)"/>
<rect x="7.0" y="1334" width="140" height="36" rx="4" fill="rgb(0,0,0)"/>
<text x="77.0" y="1385" font-size="11.5" fill="#262626" text-anchor="middle" >0</text>
<rect x="154.0" y="1329" width="150" height="61" rx="4" fill="url(#greybtn)"/>
<rect x="159.0" y="1334" width="140" height="36" rx="4" fill="rgb(26,26,26)"/>
<text x="229.0" y="1385" font-size="11.5" fill="#262626" text-anchor="middle" >10</text>
<rect x="306.0" y="1329" width="150" height="61" rx="4" fill="url(#greybtn)"/>
<rect x="311.0" y="1334" width="140" height="36" rx="4" fill="rgb(51,51,51)"/>
<text x="381.0" y="1385" font-size="11.5" fill="#262626" text-anchor="middle" >20</text>
<rect x="458.0" y="1329" width="150" height="61" rx="4" fill="url(#greybtn)"/>
<rect x="463.0" y="1334" width="140" height="36" rx="4" fill="rgb(77,77,77)"/>
<text x="533.0" y="1385" font-size="11.5" fill="#262626" text-anchor="middle" >30</text>
<rect x="610.0" y="1329" width="150" height="61" rx="4" fill="url(#greybtn)"/>
<rect x="615.0" y="1334" width="140" height="36" rx="4" fill="rgb(102,102,102)"/>
<text x="685.0" y="1385" font-size="11.5" fill="#262626" text-anchor="middle" >40</text>
<rect x="762.0" y="1329" width="150" height="61" rx="4" fill="url(#greybtn)"/>
<rect x="767.0" y="1334" width="140" height="36" rx="4" fill="rgb(128,128,128)"/>
<text x="837.0" y="1385" font-size="11.5" fill="#262626" text-anchor="middle" >50</text>
<rect x="914.0" y="1329" width="150" height="61" rx="4" fill="url(#greybtn)"/>
<rect x="919.0" y="1334" width="140" height="36" rx="4" fill="rgb(153,153,153)"/>
<text x="989.0" y="1385" font-size="11.5" fill="#262626" text-anchor="middle" >60</text>
<rect x="1066.0" y="1329" width="150" height="61" rx="4" fill="url(#greybtn)"/>
<rect x="1071.0" y="1334" width="140" height="36" rx="4" fill="rgb(179,179,179)"/>
<text x="1141.0" y="1385" font-size="11.5" fill="#262626" text-anchor="middle" >70</text>
<rect x="1218.0" y="1329" width="150" height="61" rx="4" fill="url(#greybtn)"/>
<rect x="1223.0" y="1334" width="140" height="36" rx="4" fill="rgb(204,204,204)"/>
<text x="1293.0" y="1385" font-size="11.5" fill="#262626" text-anchor="middle" >80</text>
<rect x="1370.0" y="1329" width="150" height="61" rx="4" fill="url(#greybtn)"/>
<rect x="1375.0" y="1334" width="140" height="36" rx="4" fill="rgb(230,230,230)"/>
<text x="1445.0" y="1385" font-size="11.5" fill="#262626" text-anchor="middle" >90</text>
<rect x="1522" y="1329" width="150" height="61" rx="4" fill="#2c2c2c"/>
<rect x="1522" y="1329" width="150" height="5" rx="2" fill="#1a1a1a"/>
<rect x="1527" y="1334" width="140" height="36" rx="4" fill="#fff"/>
<text x="1597" y="1385" font-size="11.5" fill="#fff" text-anchor="middle" font-weight="bold" >100</text>
<rect x="1969" y="1329" width="48" height="61" rx="3" fill="url(#greybtn)"/>
<rect x="1969" y="1346.5" width="48" height="1.5" fill="#3a3a3a"/>
<circle cx="1993" cy="1338" r="6" fill="#888" opacity="0.7"/><path d="M1989 1341 L1993 1336.5 L1997 1341 Z" fill="#333"/>
<rect x="1978.5" y="1354.5" width="29" height="29" rx="4" fill="#a4a4a4" stroke="#2a2a2a" stroke-width="2.5"/>
<rect x="1979.7" y="1369" width="26.6" height="13.3" rx="3" fill="#8a8a8a"/>
<rect x="1986" y="1362" width="14" height="7" fill="#222"/>
<rect x="1986" y="1369" width="14" height="7" fill="#000"/>
<rect x="2018" y="1329" width="226" height="30" fill="url(#greybtn)"/>
<circle cx="2040.5" cy="1344" r="10" fill="url(#circg)" opacity="0.75"/>
<rect x="2063.2000000000003" y="1329" width="1.2" height="30" fill="#3a3a3a"/>
<circle cx="2086.3" cy="1344" r="10" fill="url(#circg)" opacity="0.75"/>
<rect x="2108.7000000000003" y="1329" width="1.2" height="30" fill="#3a3a3a"/>
<circle cx="2131.8" cy="1344" r="10" fill="url(#circg)" opacity="0.75"/>
<rect x="2153.7000000000003" y="1329" width="1.2" height="30" fill="#3a3a3a"/>
<circle cx="2176.8" cy="1344" r="10" fill="url(#circg)" opacity="0.75"/>
<rect x="2198.7000000000003" y="1329" width="1.2" height="30" fill="#3a3a3a"/>
<circle cx="2221.8" cy="1344" r="10" fill="url(#circg)" opacity="0.75"/>
<rect x="2037" y="1340" width="8" height="7.6" fill="#2a2a2a"/>
<path d="M2084.2 1340 L2092.5 1344.8 L2084.2 1349.6 Z" fill="#2a2a2a"/>
<path d="M2128.5 1339.5 H2126.3 V1349.5 H2128.5 M2135.5 1339.5 H2137.7 V1349.5 H2135.5" fill="none" stroke="#2a2a2a" stroke-width="1.6"/>
<rect x="2130" y="1343.8" width="1.5" height="1.5" fill="#2a2a2a"/><rect x="2132.6" y="1343.8" width="1.5" height="1.5" fill="#2a2a2a"/>
<path d="M2177 1344 C2175 1341 2171 1341 2171 1344 C2171 1347 2175 1347 2177 1344 C2179 1341 2183 1341 2183 1344 C2183 1347 2179 1347 2177 1344 Z" fill="none" stroke="#2a2a2a" stroke-width="1.7"/>
<path d="M2226.5 1341.5 A5.6 5.6 0 0 0 2216.2 1343.5 M2216.8 1347.5 A5.6 5.6 0 0 0 2227 1345.5" fill="none" stroke="#2a2a2a" stroke-width="2"/>
<path d="M2224 1337.8 L2228.8 1342.6 L2223 1343 Z M2219.2 1351.2 L2214.4 1346.4 L2220.2 1346 Z" fill="#2a2a2a"/>
<rect x="2244" y="1329" width="47" height="30" fill="#262626"/>
<circle cx="2268" cy="1344" r="9" fill="#333"/>
<rect x="2018" y="1360" width="273" height="30" rx="2" fill="url(#greybtn)"/>
<rect x="2153.6" y="1360" width="1.2" height="30" fill="#3a3a3a"/>
<circle cx="2048.5" cy="1375" r="10" fill="url(#circg)" opacity="0.75"/>
<path d="M2049 1370 L2044 1375 L2049 1380 M2054 1370 L2049 1375 L2054 1380" fill="none" stroke="#333" stroke-width="1.8"/>
<circle cx="2264" cy="1375" r="10" fill="url(#circg)" opacity="0.75"/>
<path d="M2259 1370 L2264 1375 L2259 1380 M2264 1370 L2269 1375 L2264 1380" fill="none" stroke="#333" stroke-width="1.8"/>
<text x="2075.5" y="1383" font-size="22.5" fill="#2a2a2a" text-anchor="start" font-weight="bold" textLength="50.5" lengthAdjust="spacingAndGlyphs" >Back</text>
<text x="2182.5" y="1383" font-size="22.5" fill="#2a2a2a" text-anchor="start" font-weight="bold" textLength="51.5" lengthAdjust="spacingAndGlyphs" >Next</text>
<rect x="0" y="1390" width="2293" height="1" fill="#222"/>
<rect x="0" y="1391" width="2293" height="1" fill="#888"/>
<rect x="0" y="0" width="1" height="1392" fill="#858585"/>
<rect x="1" y="96" width="1" height="1294" fill="#222"/>
<rect x="2290" y="96" width="1.6" height="1294" fill="#151515"/>
<rect x="2291.6" y="0" width="1.4" height="1392" fill="#7d7d7d"/>
</svg></body></html>
